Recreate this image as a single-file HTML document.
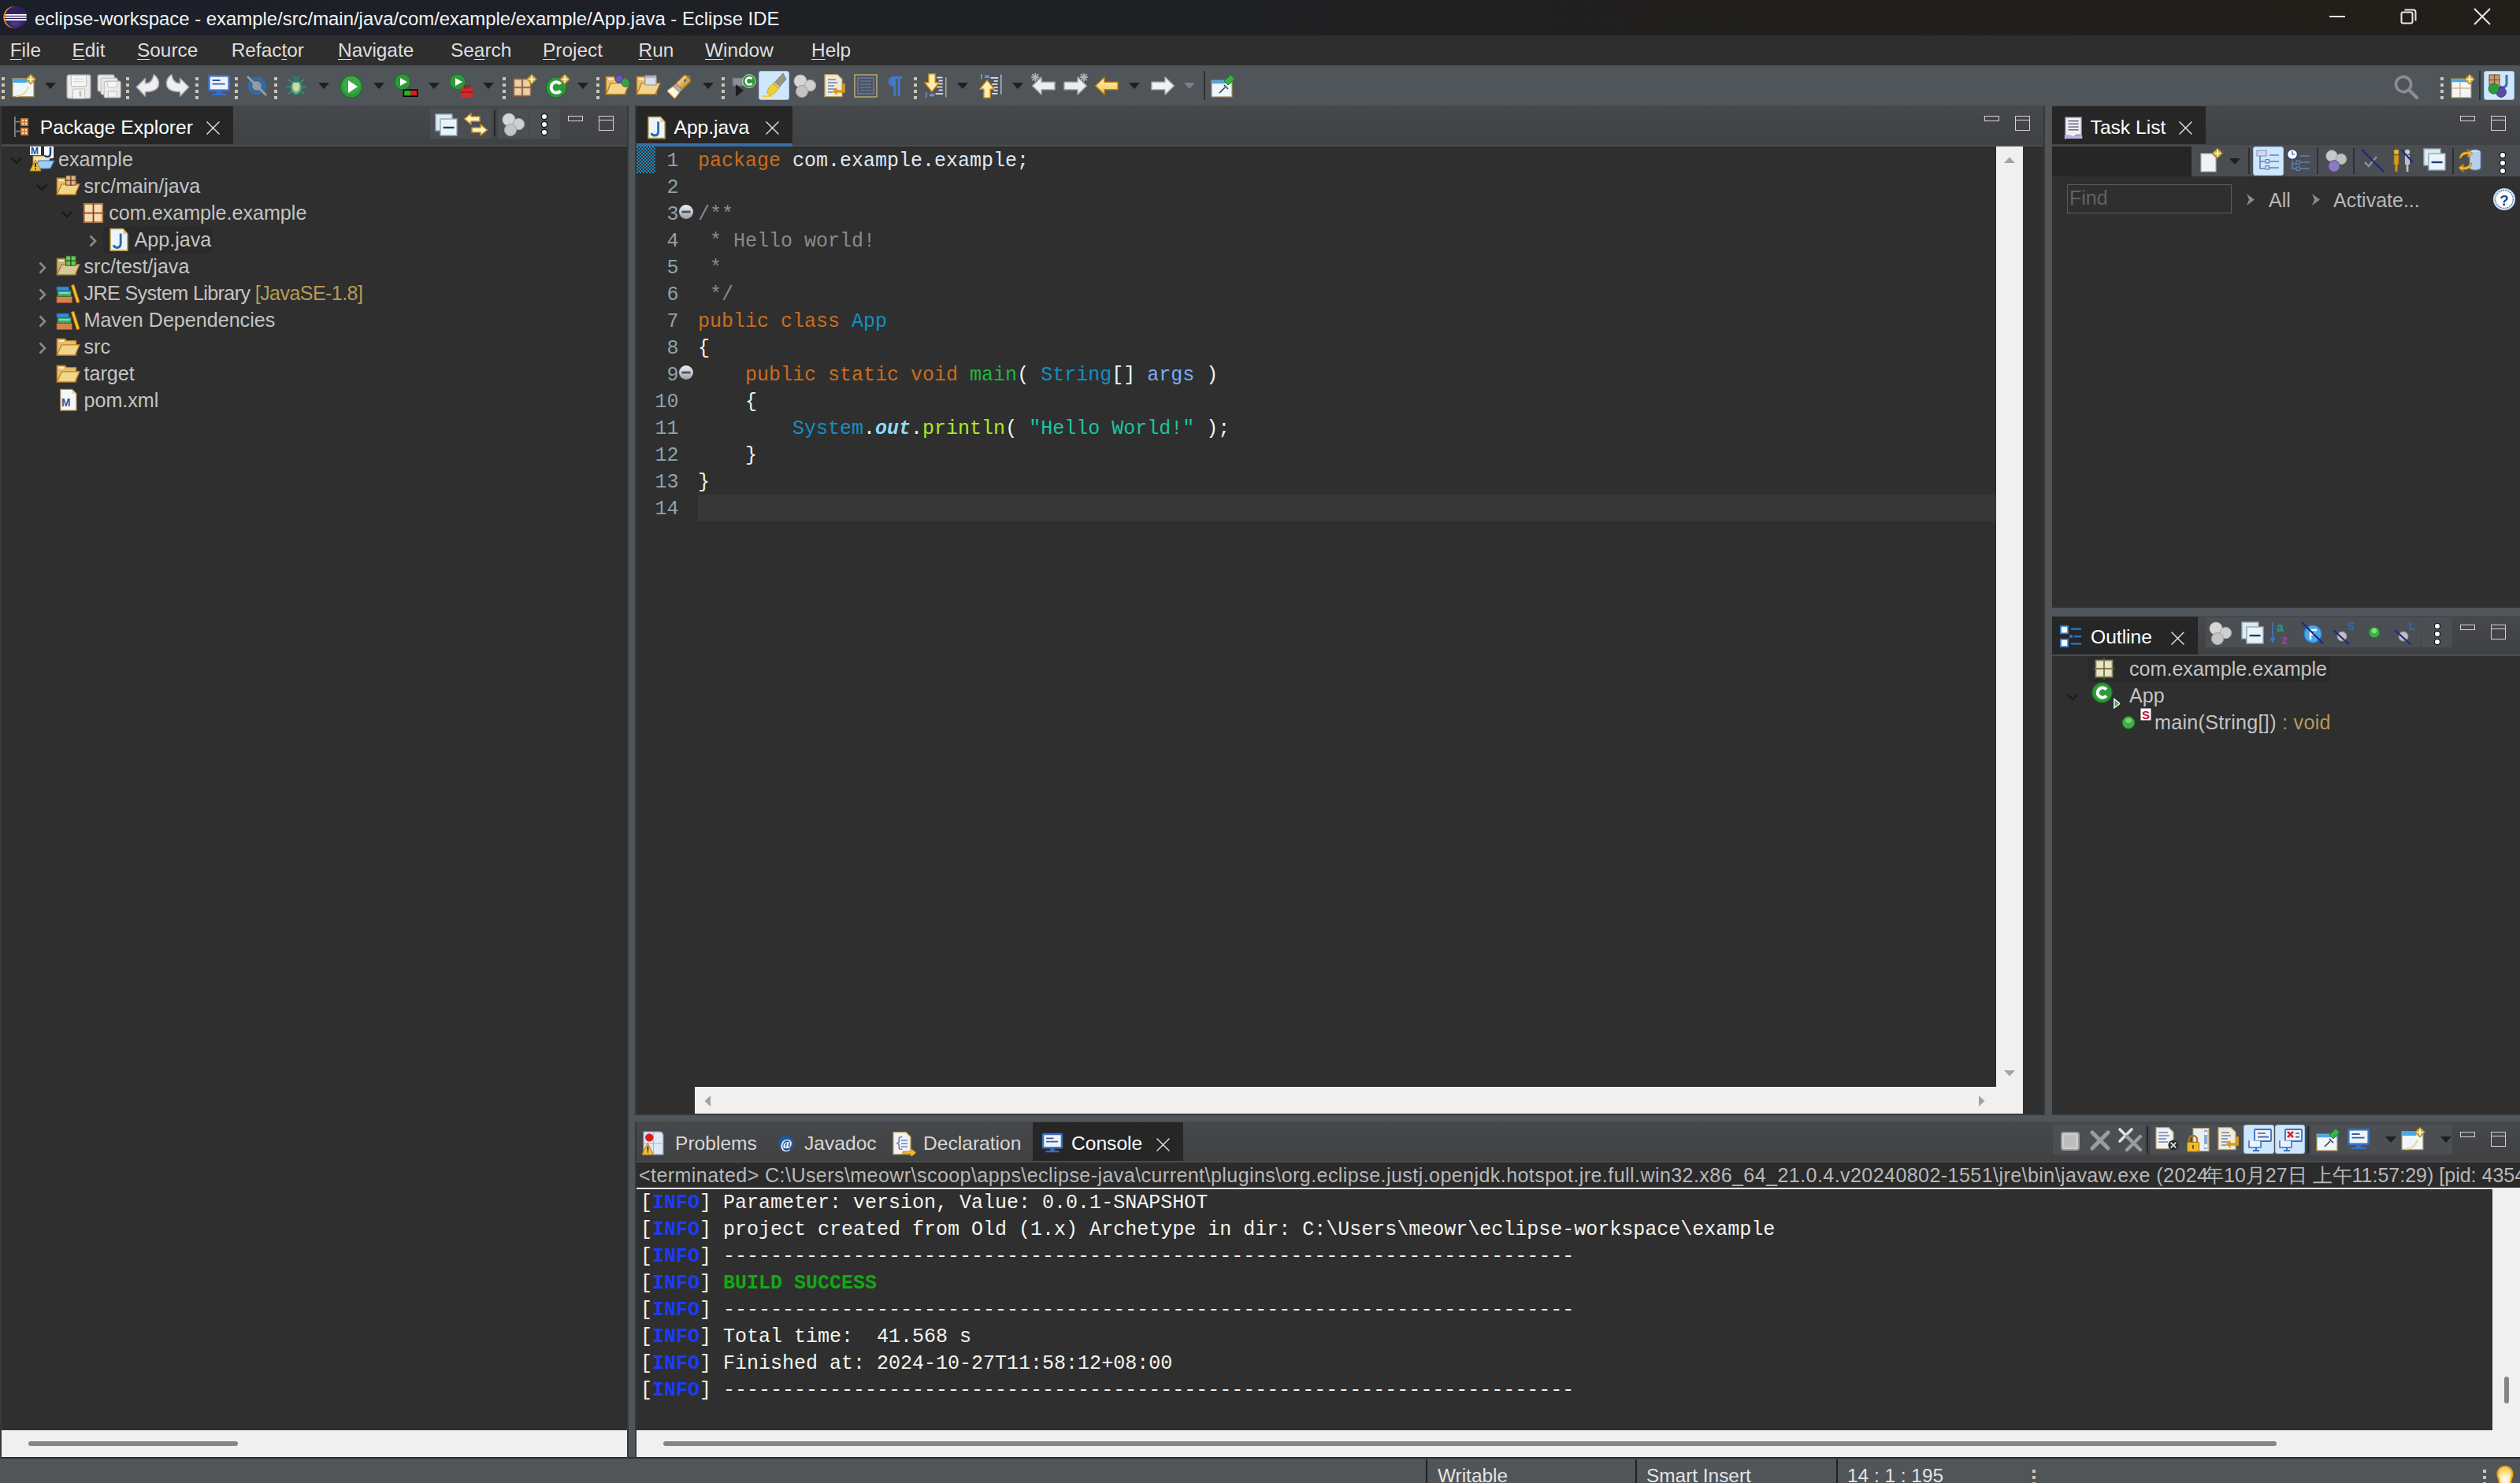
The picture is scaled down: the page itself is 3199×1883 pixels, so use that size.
<!DOCTYPE html><html><head><meta charset="utf-8"><style>html,body{margin:0;padding:0;}body{width:3199px;height:1883px;position:relative;overflow:hidden;background:#50555a;}</style></head><body><div style="position:absolute;left:0px;top:0px;width:3199px;height:45px;background:linear-gradient(90deg,#1b1f29 0%,#1e2025 30%,#1f2022 50%,#211f1d 70%,#221e19 100%);"></div><svg style="position:absolute;left:0px;top:0px;" width="45" height="45" viewBox="0 0 45 45"><circle cx="18.2" cy="21.9" r="13.9" fill="#f7941e"/><circle cx="20.1" cy="21.9" r="13.9" fill="#2f2160"/>
<defs><radialGradient id="eg"><stop offset="0" stop-color="#4b3a8e"/><stop offset="0.7" stop-color="#3f3079"/><stop offset="1" stop-color="#2f2160"/></radialGradient></defs><ellipse cx="19.7" cy="29.5" rx="9" ry="5.5" fill="url(#eg)"/>
<rect x="6" y="17.3" width="28" height="9.4" fill="#231848"/>
<rect x="6.5" y="17.9" width="27.2" height="1.9" fill="#fff"/><rect x="6.2" y="20.9" width="27.5" height="2" fill="#ececec"/><rect x="6.5" y="24.1" width="27.2" height="2" fill="#fff"/></svg><div style="position:absolute;left:44px;top:11.77px;font-family:'Liberation Sans', sans-serif;font-size:23.9px;line-height:23.9px;color:#f4f4f4;white-space:pre;">eclipse-workspace - example/src/main/java/com/example/example/App.java - Eclipse IDE</div><div style="position:absolute;left:2957px;top:20px;width:20px;height:2px;background:#e8e8e8;"></div><svg style="position:absolute;left:3046px;top:9px;" width="24" height="24" viewBox="0 0 24 24"><rect x="2.5" y="6.5" width="14" height="14" rx="2" fill="none" stroke="#e8e8e8" stroke-width="2"/><path d="M6.5 3.5 H17.5 a3 3 0 0 1 3 3 V17.5" fill="none" stroke="#e8e8e8" stroke-width="2"/></svg><svg style="position:absolute;left:3139px;top:9px;" width="24" height="24" viewBox="0 0 24 24"><path d="M2 2 L22 22 M22 2 L2 22" stroke="#e8e8e8" stroke-width="2"/></svg><div style="position:absolute;left:0px;top:45px;width:3199px;height:38px;background:#2e2e2e;"></div><div style="position:absolute;left:12.7px;top:51.95px;font-family:'Liberation Sans', sans-serif;font-size:24.4px;line-height:24.4px;color:#dedede;white-space:pre;"><span style="text-decoration:underline;text-decoration-thickness:1.4px;text-underline-offset:2.5px">F</span>ile</div><div style="position:absolute;left:91.4px;top:51.95px;font-family:'Liberation Sans', sans-serif;font-size:24.4px;line-height:24.4px;color:#dedede;white-space:pre;"><span style="text-decoration:underline;text-decoration-thickness:1.4px;text-underline-offset:2.5px">E</span>dit</div><div style="position:absolute;left:174px;top:51.95px;font-family:'Liberation Sans', sans-serif;font-size:24.4px;line-height:24.4px;color:#dedede;white-space:pre;"><span style="text-decoration:underline;text-decoration-thickness:1.4px;text-underline-offset:2.5px">S</span>ource</div><div style="position:absolute;left:293.7px;top:51.95px;font-family:'Liberation Sans', sans-serif;font-size:24.4px;line-height:24.4px;color:#dedede;white-space:pre;">Refac<span style="text-decoration:underline;text-decoration-thickness:1.4px;text-underline-offset:2.5px">t</span>or</div><div style="position:absolute;left:429px;top:51.95px;font-family:'Liberation Sans', sans-serif;font-size:24.4px;line-height:24.4px;color:#dedede;white-space:pre;"><span style="text-decoration:underline;text-decoration-thickness:1.4px;text-underline-offset:2.5px">N</span>avigate</div><div style="position:absolute;left:572px;top:51.95px;font-family:'Liberation Sans', sans-serif;font-size:24.4px;line-height:24.4px;color:#dedede;white-space:pre;">Se<span style="text-decoration:underline;text-decoration-thickness:1.4px;text-underline-offset:2.5px">a</span>rch</div><div style="position:absolute;left:689px;top:51.95px;font-family:'Liberation Sans', sans-serif;font-size:24.4px;line-height:24.4px;color:#dedede;white-space:pre;"><span style="text-decoration:underline;text-decoration-thickness:1.4px;text-underline-offset:2.5px">P</span>roject</div><div style="position:absolute;left:810.5px;top:51.95px;font-family:'Liberation Sans', sans-serif;font-size:24.4px;line-height:24.4px;color:#dedede;white-space:pre;"><span style="text-decoration:underline;text-decoration-thickness:1.4px;text-underline-offset:2.5px">R</span>un</div><div style="position:absolute;left:895px;top:51.95px;font-family:'Liberation Sans', sans-serif;font-size:24.4px;line-height:24.4px;color:#dedede;white-space:pre;"><span style="text-decoration:underline;text-decoration-thickness:1.4px;text-underline-offset:2.5px">W</span>indow</div><div style="position:absolute;left:1030px;top:51.95px;font-family:'Liberation Sans', sans-serif;font-size:24.4px;line-height:24.4px;color:#dedede;white-space:pre;"><span style="text-decoration:underline;text-decoration-thickness:1.4px;text-underline-offset:2.5px">H</span>elp</div><div style="position:absolute;left:0px;top:83px;width:3199px;height:51px;background:#50555a;"></div><div style="position:absolute;left:0px;top:1850px;width:3199px;height:2px;background:#2b2d2f;"></div><div style="position:absolute;left:0px;top:1852px;width:3199px;height:31px;background:#50555a;"></div><div style="position:absolute;left:0px;top:134px;width:2px;height:1718px;background:#36383a;"></div><div style="position:absolute;left:2px;top:134px;width:794px;height:50px;background:linear-gradient(180deg,#47484b 0%,#404143 100%);"></div><div style="position:absolute;left:2px;top:184px;width:794px;height:2px;background:#4b4c4e;"></div><div style="position:absolute;left:2px;top:135px;width:294px;height:48px;background:#262626;"></div><div style="position:absolute;left:2px;top:186px;width:794px;height:1630px;background:#2f2f2f;"></div><div style="position:absolute;left:2px;top:1816px;width:794px;height:34px;background:#f0f0f0;"></div><div style="position:absolute;left:36px;top:1830px;width:266px;height:6px;background:#858585;border-radius:3px;"></div><div style="position:absolute;left:796px;top:134px;width:2px;height:1718px;background:#36383a;"></div><div style="position:absolute;left:806px;top:134px;width:2px;height:1282px;background:#36383a;"></div><div style="position:absolute;left:808px;top:134px;width:1786px;height:50px;background:linear-gradient(180deg,#47484b 0%,#404143 100%);"></div><div style="position:absolute;left:808px;top:184px;width:1786px;height:2px;background:#4b4c4e;"></div><div style="position:absolute;left:808px;top:135px;width:198px;height:47px;background:#262626;"></div><div style="position:absolute;left:808px;top:182px;width:198px;height:4px;background:#3470a6;"></div><div style="position:absolute;left:808px;top:186px;width:1786px;height:1228px;background:#2f2f2f;"></div><div style="position:absolute;left:2534px;top:186px;width:34px;height:1228px;background:#f0f0f0;"></div><div style="position:absolute;left:882px;top:1380px;width:1652px;height:34px;background:#f0f0f0;"></div><div style="position:absolute;left:2594px;top:134px;width:2px;height:1282px;background:#36383a;"></div><div style="position:absolute;left:806px;top:1414px;width:1790px;height:2px;background:#36383a;"></div><div style="position:absolute;left:2605px;top:134px;width:594px;height:50px;background:linear-gradient(180deg,#47484b 0%,#404143 100%);"></div><div style="position:absolute;left:2605px;top:184px;width:594px;height:2px;background:#4b4c4e;"></div><div style="position:absolute;left:2605px;top:135px;width:195px;height:48px;background:#262626;"></div><div style="position:absolute;left:2605px;top:186px;width:594px;height:584px;background:#2f2f2f;"></div><div style="position:absolute;left:2605px;top:186px;width:177px;height:38px;background:#262626;"></div><div style="position:absolute;left:2782px;top:186px;width:417px;height:38px;background:#4a4e52;"></div><div style="position:absolute;left:2605px;top:770px;width:594px;height:2px;background:#36383a;"></div><div style="position:absolute;left:2605px;top:782px;width:594px;height:49px;background:linear-gradient(180deg,#47484b 0%,#404143 100%);"></div><div style="position:absolute;left:2605px;top:831px;width:594px;height:2px;background:#4b4c4e;"></div><div style="position:absolute;left:2605px;top:783px;width:185px;height:48px;background:#262626;"></div><div style="position:absolute;left:2605px;top:833px;width:594px;height:581px;background:#2f2f2f;"></div><div style="position:absolute;left:2605px;top:1414px;width:594px;height:2px;background:#36383a;"></div><div style="position:absolute;left:806px;top:1424px;width:2px;height:428px;background:#36383a;"></div><div style="position:absolute;left:808px;top:1424px;width:2391px;height:50px;background:linear-gradient(180deg,#47484b 0%,#404143 100%);"></div><div style="position:absolute;left:808px;top:1474px;width:2391px;height:2px;background:#4b4c4e;"></div><div style="position:absolute;left:1311px;top:1425px;width:191px;height:49px;background:#262626;"></div><div style="position:absolute;left:808px;top:1476px;width:2391px;height:32px;background:#2b2b2b;"></div><div style="position:absolute;left:808px;top:1508px;width:2391px;height:2px;background:#f0f0f0;"></div><div style="position:absolute;left:808px;top:1510px;width:2391px;height:306px;background:#2f2f2f;"></div><div style="position:absolute;left:3164px;top:1510px;width:35px;height:306px;background:#f0f0f0;"></div><div style="position:absolute;left:3179px;top:1748px;width:6px;height:34px;background:#858585;border-radius:3px;"></div><div style="position:absolute;left:808px;top:1816px;width:2391px;height:34px;background:#f0f0f0;"></div><div style="position:absolute;left:842px;top:1830px;width:2048px;height:6px;background:#858585;border-radius:3px;"></div><div style="position:absolute;left:50.8px;top:149.93px;font-family:'Liberation Sans', sans-serif;font-size:24.6px;line-height:24.6px;color:#ffffff;white-space:pre;">Package Explorer</div><svg style="position:absolute;left:262px;top:154px;" width="17" height="17" viewBox="0 0 17 17"><path d="M0.5 0.5 L16.5 16.5 M16.5 0.5 L0.5 16.5" stroke="#e6e6e6" stroke-width="1.4"/></svg><div style="position:absolute;left:855.5px;top:149.93px;font-family:'Liberation Sans', sans-serif;font-size:24.6px;line-height:24.6px;color:#ffffff;white-space:pre;">App.java</div><svg style="position:absolute;left:972px;top:154px;" width="17" height="17" viewBox="0 0 17 17"><path d="M0.5 0.5 L16.5 16.5 M16.5 0.5 L0.5 16.5" stroke="#e6e6e6" stroke-width="1.4"/></svg><div style="position:absolute;left:2653.6px;top:149.93px;font-family:'Liberation Sans', sans-serif;font-size:24.6px;line-height:24.6px;color:#ffffff;white-space:pre;">Task List</div><svg style="position:absolute;left:2766px;top:154px;" width="17" height="17" viewBox="0 0 17 17"><path d="M0.5 0.5 L16.5 16.5 M16.5 0.5 L0.5 16.5" stroke="#e6e6e6" stroke-width="1.4"/></svg><div style="position:absolute;left:2654px;top:797.18px;font-family:'Liberation Sans', sans-serif;font-size:24.6px;line-height:24.6px;color:#ffffff;white-space:pre;">Outline</div><svg style="position:absolute;left:2756px;top:802px;" width="17" height="17" viewBox="0 0 17 17"><path d="M0.5 0.5 L16.5 16.5 M16.5 0.5 L0.5 16.5" stroke="#e6e6e6" stroke-width="1.4"/></svg><div style="position:absolute;left:857px;top:1440.18px;font-family:'Liberation Sans', sans-serif;font-size:24.6px;line-height:24.6px;color:#d8d8d8;white-space:pre;">Problems</div><div style="position:absolute;left:1021px;top:1440.18px;font-family:'Liberation Sans', sans-serif;font-size:24.6px;line-height:24.6px;color:#d8d8d8;white-space:pre;">Javadoc</div><div style="position:absolute;left:1172px;top:1440.18px;font-family:'Liberation Sans', sans-serif;font-size:24.6px;line-height:24.6px;color:#d8d8d8;white-space:pre;">Declaration</div><div style="position:absolute;left:1360px;top:1440.18px;font-family:'Liberation Sans', sans-serif;font-size:24.6px;line-height:24.6px;color:#ffffff;white-space:pre;">Console</div><svg style="position:absolute;left:1468px;top:1445px;" width="17" height="17" viewBox="0 0 17 17"><path d="M0.5 0.5 L16.5 16.5 M16.5 0.5 L0.5 16.5" stroke="#e6e6e6" stroke-width="1.4"/></svg><div style="position:absolute;left:131px;top:288px;width:139px;height:34px;background:#2a2a2a;border-radius:3px;"></div><div style="position:absolute;left:74px;top:189.75px;font-family:'Liberation Sans', sans-serif;font-size:25.1px;line-height:25.1px;color:#c4c4c4;white-space:pre;">example</div><div style="position:absolute;left:106.5px;top:223.75px;font-family:'Liberation Sans', sans-serif;font-size:25.1px;line-height:25.1px;color:#c4c4c4;white-space:pre;">src/main/java</div><div style="position:absolute;left:138.3px;top:257.75px;font-family:'Liberation Sans', sans-serif;font-size:25.1px;line-height:25.1px;color:#c4c4c4;white-space:pre;">com.example.example</div><div style="position:absolute;left:170.6px;top:291.75px;font-family:'Liberation Sans', sans-serif;font-size:25.1px;line-height:25.1px;color:#c4c4c4;white-space:pre;">App.java</div><div style="position:absolute;left:106.5px;top:325.75px;font-family:'Liberation Sans', sans-serif;font-size:25.1px;line-height:25.1px;color:#c4c4c4;white-space:pre;">src/test/java</div><div style="position:absolute;left:106.5px;top:393.75px;font-family:'Liberation Sans', sans-serif;font-size:25.1px;line-height:25.1px;color:#c4c4c4;white-space:pre;">Maven Dependencies</div><div style="position:absolute;left:106.5px;top:427.75px;font-family:'Liberation Sans', sans-serif;font-size:25.1px;line-height:25.1px;color:#c4c4c4;white-space:pre;">src</div><div style="position:absolute;left:106.5px;top:461.75px;font-family:'Liberation Sans', sans-serif;font-size:25.1px;line-height:25.1px;color:#c4c4c4;white-space:pre;">target</div><div style="position:absolute;left:106.5px;top:495.75px;font-family:'Liberation Sans', sans-serif;font-size:25.1px;line-height:25.1px;color:#c4c4c4;white-space:pre;">pom.xml</div><div style="position:absolute;left:106.5px;top:359.75px;font-family:'Liberation Sans', sans-serif;font-size:25.1px;line-height:25.1px;color:#c4c4c4;white-space:pre;letter-spacing:-0.6px;">JRE System Library <span style="color:#b59a57">[JavaSE-1.8]</span></div><svg style="position:absolute;left:13px;top:199.4px;" width="16" height="10" viewBox="0 0 16 10"><path d="M1.5 1.5 L8 8 L14.5 1.5" fill="none" stroke="#1c1c1c" stroke-width="2.6"/></svg><svg style="position:absolute;left:45px;top:233.3px;" width="16" height="10" viewBox="0 0 16 10"><path d="M1.5 1.5 L8 8 L14.5 1.5" fill="none" stroke="#1c1c1c" stroke-width="2.6"/></svg><svg style="position:absolute;left:77px;top:266.7px;" width="16" height="10" viewBox="0 0 16 10"><path d="M1.5 1.5 L8 8 L14.5 1.5" fill="none" stroke="#1c1c1c" stroke-width="2.6"/></svg><svg style="position:absolute;left:113px;top:298.3px;" width="10" height="16" viewBox="0 0 10 16"><path d="M1.5 1.5 L8 8 L1.5 14.5" fill="none" stroke="#8a8a8a" stroke-width="2.6"/></svg><svg style="position:absolute;left:49px;top:332.4px;" width="10" height="16" viewBox="0 0 10 16"><path d="M1.5 1.5 L8 8 L1.5 14.5" fill="none" stroke="#8a8a8a" stroke-width="2.6"/></svg><svg style="position:absolute;left:49px;top:366.4px;" width="10" height="16" viewBox="0 0 10 16"><path d="M1.5 1.5 L8 8 L1.5 14.5" fill="none" stroke="#8a8a8a" stroke-width="2.6"/></svg><svg style="position:absolute;left:49px;top:400.4px;" width="10" height="16" viewBox="0 0 10 16"><path d="M1.5 1.5 L8 8 L1.5 14.5" fill="none" stroke="#8a8a8a" stroke-width="2.6"/></svg><svg style="position:absolute;left:49px;top:434.4px;" width="10" height="16" viewBox="0 0 10 16"><path d="M1.5 1.5 L8 8 L1.5 14.5" fill="none" stroke="#8a8a8a" stroke-width="2.6"/></svg><div style="position:absolute;left:886px;top:628px;width:1648px;height:34px;background:#373737;"></div><div style="position:absolute;left:886px;top:192.34px;font-family:'Liberation Mono', monospace;font-size:25px;line-height:25px;color:#dfe9f5;white-space:pre;"><span style="color:#cc6c1d;">package</span><span style="color:#dfe9f5;"> com.example.example;</span></div><div style="position:absolute;left:846.5px;top:192.34px;font-family:'Liberation Mono', monospace;font-size:25px;line-height:25px;color:#8ea4a9;white-space:pre;">1</div><div style="position:absolute;left:886px;top:226.34px;font-family:'Liberation Mono', monospace;font-size:25px;line-height:25px;color:#dfe9f5;white-space:pre;"></div><div style="position:absolute;left:846.5px;top:226.34px;font-family:'Liberation Mono', monospace;font-size:25px;line-height:25px;color:#8ea4a9;white-space:pre;">2</div><div style="position:absolute;left:886px;top:260.34px;font-family:'Liberation Mono', monospace;font-size:25px;line-height:25px;color:#dfe9f5;white-space:pre;"><span style="color:#8a8a8a;">/**</span></div><div style="position:absolute;left:846.5px;top:260.34px;font-family:'Liberation Mono', monospace;font-size:25px;line-height:25px;color:#8ea4a9;white-space:pre;">3</div><div style="position:absolute;left:886px;top:294.34px;font-family:'Liberation Mono', monospace;font-size:25px;line-height:25px;color:#dfe9f5;white-space:pre;"><span style="color:#8a8a8a;"> * Hello world!</span></div><div style="position:absolute;left:846.5px;top:294.34px;font-family:'Liberation Mono', monospace;font-size:25px;line-height:25px;color:#8ea4a9;white-space:pre;">4</div><div style="position:absolute;left:886px;top:328.34px;font-family:'Liberation Mono', monospace;font-size:25px;line-height:25px;color:#dfe9f5;white-space:pre;"><span style="color:#8a8a8a;"> *</span></div><div style="position:absolute;left:846.5px;top:328.34px;font-family:'Liberation Mono', monospace;font-size:25px;line-height:25px;color:#8ea4a9;white-space:pre;">5</div><div style="position:absolute;left:886px;top:362.34px;font-family:'Liberation Mono', monospace;font-size:25px;line-height:25px;color:#dfe9f5;white-space:pre;"><span style="color:#8a8a8a;"> */</span></div><div style="position:absolute;left:846.5px;top:362.34px;font-family:'Liberation Mono', monospace;font-size:25px;line-height:25px;color:#8ea4a9;white-space:pre;">6</div><div style="position:absolute;left:886px;top:396.34px;font-family:'Liberation Mono', monospace;font-size:25px;line-height:25px;color:#dfe9f5;white-space:pre;"><span style="color:#cc6c1d;">public</span> <span style="color:#cc6c1d;">class</span> <span style="color:#1290c3;">App</span></div><div style="position:absolute;left:846.5px;top:396.34px;font-family:'Liberation Mono', monospace;font-size:25px;line-height:25px;color:#8ea4a9;white-space:pre;">7</div><div style="position:absolute;left:886px;top:430.34px;font-family:'Liberation Mono', monospace;font-size:25px;line-height:25px;color:#dfe9f5;white-space:pre;"><span style="color:#f4f4f0;">{</span></div><div style="position:absolute;left:846.5px;top:430.34px;font-family:'Liberation Mono', monospace;font-size:25px;line-height:25px;color:#8ea4a9;white-space:pre;">8</div><div style="position:absolute;left:886px;top:464.34px;font-family:'Liberation Mono', monospace;font-size:25px;line-height:25px;color:#dfe9f5;white-space:pre;">    <span style="color:#cc6c1d;">public</span> <span style="color:#cc6c1d;">static</span> <span style="color:#cc6c1d;">void</span> <span style="color:#1eb540;">main</span><span style="color:#f4f4f0;">( </span><span style="color:#1290c3;">String</span><span style="color:#f4f4f0;">[] </span><span style="color:#79abff;">args</span><span style="color:#f4f4f0;"> )</span></div><div style="position:absolute;left:846.5px;top:464.34px;font-family:'Liberation Mono', monospace;font-size:25px;line-height:25px;color:#8ea4a9;white-space:pre;">9</div><div style="position:absolute;left:886px;top:498.34px;font-family:'Liberation Mono', monospace;font-size:25px;line-height:25px;color:#dfe9f5;white-space:pre;">    <span style="color:#f4f4f0;">{</span></div><div style="position:absolute;left:831.5px;top:498.34px;font-family:'Liberation Mono', monospace;font-size:25px;line-height:25px;color:#8ea4a9;white-space:pre;">10</div><div style="position:absolute;left:886px;top:532.34px;font-family:'Liberation Mono', monospace;font-size:25px;line-height:25px;color:#dfe9f5;white-space:pre;">        <span style="color:#1290c3;">System</span><span style="color:#f4f4f0;">.</span><span style="color:#8ddaf8;font-weight:bold;font-style:italic;">out</span><span style="color:#f4f4f0;">.</span><span style="color:#a7ec21;">println</span><span style="color:#f4f4f0;">( </span><span style="color:#17c6a3;">&quot;Hello World!&quot;</span><span style="color:#f4f4f0;"> );</span></div><div style="position:absolute;left:831.5px;top:532.34px;font-family:'Liberation Mono', monospace;font-size:25px;line-height:25px;color:#8ea4a9;white-space:pre;">11</div><div style="position:absolute;left:886px;top:566.34px;font-family:'Liberation Mono', monospace;font-size:25px;line-height:25px;color:#dfe9f5;white-space:pre;">    <span style="color:#f4f4f0;">}</span></div><div style="position:absolute;left:831.5px;top:566.34px;font-family:'Liberation Mono', monospace;font-size:25px;line-height:25px;color:#8ea4a9;white-space:pre;">12</div><div style="position:absolute;left:886px;top:600.34px;font-family:'Liberation Mono', monospace;font-size:25px;line-height:25px;color:#dfe9f5;white-space:pre;"><span style="color:#f4f4f0;">}</span></div><div style="position:absolute;left:831.5px;top:600.34px;font-family:'Liberation Mono', monospace;font-size:25px;line-height:25px;color:#8ea4a9;white-space:pre;">13</div><div style="position:absolute;left:886px;top:634.34px;font-family:'Liberation Mono', monospace;font-size:25px;line-height:25px;color:#dfe9f5;white-space:pre;"></div><div style="position:absolute;left:831.5px;top:634.34px;font-family:'Liberation Mono', monospace;font-size:25px;line-height:25px;color:#8ea4a9;white-space:pre;">14</div><svg style="position:absolute;left:808px;top:186px;" width="24" height="34" viewBox="0 0 24 34"><defs><pattern id="chk" width="4" height="4" patternUnits="userSpaceOnUse"><rect width="4" height="4" fill="#1b8fc6"/><rect x="2" y="0" width="2" height="2" fill="#3a2a22"/><rect x="0" y="2" width="2" height="2" fill="#3a2a22"/></pattern></defs><rect width="24" height="34" fill="url(#chk)"/></svg><svg style="position:absolute;left:861px;top:259px;" width="20" height="20" viewBox="0 0 20 20"><defs><linearGradient id="fg" x1="0" y1="0" x2="0" y2="1"><stop offset="0" stop-color="#f0f2f6"/><stop offset="1" stop-color="#9a9ea6"/></linearGradient></defs><circle cx="10" cy="10" r="9" fill="url(#fg)"/><rect x="4.5" y="8.6" width="11" height="2.8" fill="#4a5060"/></svg><svg style="position:absolute;left:861px;top:463px;" width="20" height="20" viewBox="0 0 20 20"><defs><linearGradient id="fg" x1="0" y1="0" x2="0" y2="1"><stop offset="0" stop-color="#f0f2f6"/><stop offset="1" stop-color="#9a9ea6"/></linearGradient></defs><circle cx="10" cy="10" r="9" fill="url(#fg)"/><rect x="4.5" y="8.6" width="11" height="2.8" fill="#4a5060"/></svg><div style="position:absolute;left:811px;top:1479.84px;font-family:'Liberation Sans', sans-serif;font-size:25px;line-height:25px;color:#b8b8b8;white-space:pre;letter-spacing:0.45px;">&lt;terminated&gt; C:\Users\meowr\scoop\apps\eclipse-java\current\plugins\org.eclipse.justj.openjdk.hotspot.jre.full.win32.x86_64_21.0.4.v20240802-1551\jre\bin\javaw.exe (2024</div><div style="position:absolute;left:2798px;top:1479.84px;font-family:'Liberation Sans', sans-serif;font-size:25px;line-height:25px;color:#b8b8b8;white-space:pre;">年10月27日 上午11:57:29) [pid: 4354]</div><div style="position:absolute;left:813px;top:1515.34px;font-family:'Liberation Mono', monospace;font-size:25px;line-height:25px;color:#f4f4f0;white-space:pre;"><span style="color:#f4f4f0;">[</span><span style="color:#1a3cff;font-weight:bold;">INFO</span><span style="color:#f4f4f0;">] </span><span style="color:#f4f4f0;">Parameter: version, Value: 0.0.1-SNAPSHOT</span></div><div style="position:absolute;left:813px;top:1549.34px;font-family:'Liberation Mono', monospace;font-size:25px;line-height:25px;color:#f4f4f0;white-space:pre;"><span style="color:#f4f4f0;">[</span><span style="color:#1a3cff;font-weight:bold;">INFO</span><span style="color:#f4f4f0;">] </span><span style="color:#f4f4f0;">project created from Old (1.x) Archetype in dir: C:\Users\meowr\eclipse-workspace\example</span></div><div style="position:absolute;left:813px;top:1583.34px;font-family:'Liberation Mono', monospace;font-size:25px;line-height:25px;color:#f4f4f0;white-space:pre;"><span style="color:#f4f4f0;">[</span><span style="color:#1a3cff;font-weight:bold;">INFO</span><span style="color:#f4f4f0;">] </span><span style="color:#f4f4f0;">------------------------------------------------------------------------</span></div><div style="position:absolute;left:813px;top:1617.34px;font-family:'Liberation Mono', monospace;font-size:25px;line-height:25px;color:#f4f4f0;white-space:pre;"><span style="color:#f4f4f0;">[</span><span style="color:#1a3cff;font-weight:bold;">INFO</span><span style="color:#f4f4f0;">] </span><span style="color:#14a814;font-weight:bold;">BUILD SUCCESS</span></div><div style="position:absolute;left:813px;top:1651.34px;font-family:'Liberation Mono', monospace;font-size:25px;line-height:25px;color:#f4f4f0;white-space:pre;"><span style="color:#f4f4f0;">[</span><span style="color:#1a3cff;font-weight:bold;">INFO</span><span style="color:#f4f4f0;">] </span><span style="color:#f4f4f0;">------------------------------------------------------------------------</span></div><div style="position:absolute;left:813px;top:1685.34px;font-family:'Liberation Mono', monospace;font-size:25px;line-height:25px;color:#f4f4f0;white-space:pre;"><span style="color:#f4f4f0;">[</span><span style="color:#1a3cff;font-weight:bold;">INFO</span><span style="color:#f4f4f0;">] </span><span style="color:#f4f4f0;">Total time:  41.568 s</span></div><div style="position:absolute;left:813px;top:1719.34px;font-family:'Liberation Mono', monospace;font-size:25px;line-height:25px;color:#f4f4f0;white-space:pre;"><span style="color:#f4f4f0;">[</span><span style="color:#1a3cff;font-weight:bold;">INFO</span><span style="color:#f4f4f0;">] </span><span style="color:#f4f4f0;">Finished at: 2024-10-27T11:58:12+08:00</span></div><div style="position:absolute;left:813px;top:1753.34px;font-family:'Liberation Mono', monospace;font-size:25px;line-height:25px;color:#f4f4f0;white-space:pre;"><span style="color:#f4f4f0;">[</span><span style="color:#1a3cff;font-weight:bold;">INFO</span><span style="color:#f4f4f0;">] </span><span style="color:#f4f4f0;">------------------------------------------------------------------------</span></div><div style="position:absolute;left:2624px;top:234px;width:209px;height:37px;background:transparent;box-sizing:border-box;border:1.5px solid #5c5c5c;"></div><div style="position:absolute;left:2627px;top:239.34px;font-family:'Liberation Sans', sans-serif;font-size:25px;line-height:25px;color:#626262;white-space:pre;">Find</div><div style="position:absolute;left:2880px;top:241.84px;font-family:'Liberation Sans', sans-serif;font-size:25px;line-height:25px;color:#b8b8b8;white-space:pre;">All</div><div style="position:absolute;left:2962px;top:241.84px;font-family:'Liberation Sans', sans-serif;font-size:25px;line-height:25px;color:#b8b8b8;white-space:pre;">Activate...</div><div style="position:absolute;left:2651px;top:833px;width:307px;height:33px;background:#2a2a2a;border-radius:3px;"></div><div style="position:absolute;left:2703px;top:836.75px;font-family:'Liberation Sans', sans-serif;font-size:25.1px;line-height:25.1px;color:#c4c4c4;white-space:pre;">com.example.example</div><div style="position:absolute;left:2703px;top:870.75px;font-family:'Liberation Sans', sans-serif;font-size:25.1px;line-height:25.1px;color:#c4c4c4;white-space:pre;">App</div><div style="position:absolute;left:2735px;top:904.75px;font-family:'Liberation Sans', sans-serif;font-size:25.1px;line-height:25.1px;color:#c4c4c4;white-space:pre;letter-spacing:0.3px;">main(String[]) <span style="color:#b59a57">: void</span></div><svg style="position:absolute;left:2623px;top:879.5px;" width="16" height="10" viewBox="0 0 16 10"><path d="M1.5 1.5 L8 8 L14.5 1.5" fill="none" stroke="#1c1c1c" stroke-width="2.6"/></svg><div style="position:absolute;left:1810px;top:1853px;width:2px;height:30px;background:#1e2022;"></div><div style="position:absolute;left:2076px;top:1853px;width:2px;height:30px;background:#1e2022;"></div><div style="position:absolute;left:2331px;top:1853px;width:2px;height:30px;background:#1e2022;"></div><div style="position:absolute;left:1825px;top:1862.35px;font-family:'Liberation Sans', sans-serif;font-size:24.4px;line-height:24.4px;color:#e4e4e4;white-space:pre;">Writable</div><div style="position:absolute;left:2090px;top:1862.35px;font-family:'Liberation Sans', sans-serif;font-size:24.4px;line-height:24.4px;color:#e4e4e4;white-space:pre;">Smart Insert</div><div style="position:absolute;left:2345px;top:1862.35px;font-family:'Liberation Sans', sans-serif;font-size:24.4px;line-height:24.4px;color:#e4e4e4;white-space:pre;">14 : 1 : 195</div><svg style="position:absolute;left:2px;top:98px" width="32" height="32" viewBox="0 0 16 16" preserveAspectRatio="none"><rect x="0" y="0" width="2" height="2" fill="#cec5b5"/><rect x="0" y="4" width="2" height="2" fill="#cec5b5"/><rect x="0" y="8" width="2" height="2" fill="#cec5b5"/><rect x="0" y="12" width="2" height="2" fill="#cec5b5"/></svg><svg style="position:absolute;left:160px;top:98px" width="32" height="32" viewBox="0 0 16 16" preserveAspectRatio="none"><rect x="0" y="0" width="2" height="2" fill="#cec5b5"/><rect x="0" y="4" width="2" height="2" fill="#cec5b5"/><rect x="0" y="8" width="2" height="2" fill="#cec5b5"/><rect x="0" y="12" width="2" height="2" fill="#cec5b5"/></svg><svg style="position:absolute;left:248px;top:98px" width="32" height="32" viewBox="0 0 16 16" preserveAspectRatio="none"><rect x="0" y="0" width="2" height="2" fill="#cec5b5"/><rect x="0" y="4" width="2" height="2" fill="#cec5b5"/><rect x="0" y="8" width="2" height="2" fill="#cec5b5"/><rect x="0" y="12" width="2" height="2" fill="#cec5b5"/></svg><svg style="position:absolute;left:298px;top:98px" width="32" height="32" viewBox="0 0 16 16" preserveAspectRatio="none"><rect x="0" y="0" width="2" height="2" fill="#cec5b5"/><rect x="0" y="4" width="2" height="2" fill="#cec5b5"/><rect x="0" y="8" width="2" height="2" fill="#cec5b5"/><rect x="0" y="12" width="2" height="2" fill="#cec5b5"/></svg><svg style="position:absolute;left:348px;top:98px" width="32" height="32" viewBox="0 0 16 16" preserveAspectRatio="none"><rect x="0" y="0" width="2" height="2" fill="#cec5b5"/><rect x="0" y="4" width="2" height="2" fill="#cec5b5"/><rect x="0" y="8" width="2" height="2" fill="#cec5b5"/><rect x="0" y="12" width="2" height="2" fill="#cec5b5"/></svg><svg style="position:absolute;left:638px;top:98px" width="32" height="32" viewBox="0 0 16 16" preserveAspectRatio="none"><rect x="0" y="0" width="2" height="2" fill="#cec5b5"/><rect x="0" y="4" width="2" height="2" fill="#cec5b5"/><rect x="0" y="8" width="2" height="2" fill="#cec5b5"/><rect x="0" y="12" width="2" height="2" fill="#cec5b5"/></svg><svg style="position:absolute;left:757px;top:98px" width="32" height="32" viewBox="0 0 16 16" preserveAspectRatio="none"><rect x="0" y="0" width="2" height="2" fill="#cec5b5"/><rect x="0" y="4" width="2" height="2" fill="#cec5b5"/><rect x="0" y="8" width="2" height="2" fill="#cec5b5"/><rect x="0" y="12" width="2" height="2" fill="#cec5b5"/></svg><svg style="position:absolute;left:916px;top:98px" width="32" height="32" viewBox="0 0 16 16" preserveAspectRatio="none"><rect x="0" y="0" width="2" height="2" fill="#cec5b5"/><rect x="0" y="4" width="2" height="2" fill="#cec5b5"/><rect x="0" y="8" width="2" height="2" fill="#cec5b5"/><rect x="0" y="12" width="2" height="2" fill="#cec5b5"/></svg><svg style="position:absolute;left:1160px;top:98px" width="32" height="32" viewBox="0 0 16 16" preserveAspectRatio="none"><rect x="0" y="0" width="2" height="2" fill="#cec5b5"/><rect x="0" y="4" width="2" height="2" fill="#cec5b5"/><rect x="0" y="8" width="2" height="2" fill="#cec5b5"/><rect x="0" y="12" width="2" height="2" fill="#cec5b5"/></svg><svg style="position:absolute;left:3098px;top:98px" width="32" height="32" viewBox="0 0 16 16" preserveAspectRatio="none"><rect x="0" y="0" width="2" height="2" fill="#cec5b5"/><rect x="0" y="4" width="2" height="2" fill="#cec5b5"/><rect x="0" y="8" width="2" height="2" fill="#cec5b5"/><rect x="0" y="12" width="2" height="2" fill="#cec5b5"/></svg><svg style="position:absolute;left:14px;top:93px" width="32" height="32" viewBox="0 0 16 16" preserveAspectRatio="none"><rect x="1" y="3.3" width="13.5" height="11.6" fill="#eef7ff" stroke="#a98f4e" stroke-width="0.6"/><rect x="1.2" y="3.4" width="9" height="2.6" fill="#46a9e6"/><path d="M3 14.5 q6 0 8 -6" stroke="#f1d47a" stroke-width="0.9" fill="none"/><path d="M12.5 0.5 l3.3 3.3 l-3.3 3.3 l-3.3 -3.3z" fill="#caa43a" stroke="#9c7a20" stroke-width="0.4"/><path d="M12.5 1.9 v3.8 M10.6 3.8 h3.8" stroke="#fff6d8" stroke-width="0.9"/></svg><svg style="position:absolute;left:48px;top:92px" width="32" height="32" viewBox="0 0 16 16" preserveAspectRatio="none"><path d="M4.5 6.5 h7 l-3.5 4z" fill="#1f1f1f"/></svg><svg style="position:absolute;left:84px;top:94px" width="32" height="32" viewBox="0 0 16 16" preserveAspectRatio="none"><rect x="0.6" y="0.6" width="14.8" height="14.8" rx="1.2" fill="#ebebeb" stroke="#bdbdbd" stroke-width="0.7"/><rect x="3.2" y="0.8" width="9.6" height="7" rx="0.6" fill="#f6f6f6" stroke="#c4c4c4" stroke-width="0.6"/><path d="M4.5 3 h7 M4.5 4.8 h7" stroke="#d4d4d4" stroke-width="0.6"/><rect x="4.2" y="9.5" width="7.6" height="6" rx="0.5" fill="#f3f3f3" stroke="#c0c0c0" stroke-width="0.6"/><rect x="8.3" y="10.8" width="1.3" height="3.5" fill="#bdbdbd"/></svg><svg style="position:absolute;left:123px;top:94px" width="32" height="32" viewBox="0 0 16 16" preserveAspectRatio="none"><rect x="0.6" y="0.6" width="10.4" height="10.4" rx="1" fill="#ebebeb" stroke="#c0c0c0" stroke-width="0.6"/><rect x="2.6" y="2.6" width="10.4" height="10.4" rx="1" fill="#ebebeb" stroke="#c0c0c0" stroke-width="0.6"/><rect x="4.6" y="4.6" width="10.4" height="10.4" rx="1" fill="#ebebeb" stroke="#c0c0c0" stroke-width="0.6"/><rect x="6.8" y="4.8" width="6" height="3.6" rx="0.4" fill="#f5f5f5" stroke="#c4c4c4" stroke-width="0.5"/><rect x="7.2" y="11" width="5.4" height="3.7" fill="#f3f3f3" stroke="#c0c0c0" stroke-width="0.5"/></svg><svg style="position:absolute;left:172px;top:93px" width="32" height="32" viewBox="0 0 16 16" preserveAspectRatio="none"><path d="M0.6 8.8 L6.2 3.2 V6.4 Q10.6 6.6 11.6 0.8 Q15.6 3.6 14.6 8 Q13.4 11.8 6.2 11.8 V14.6 Z" fill="#efefef" stroke="#a9a9a9" stroke-width="0.7" stroke-linejoin="round"/></svg><svg style="position:absolute;left:209px;top:93px" width="32" height="32" viewBox="0 0 16 16" preserveAspectRatio="none"><g transform="translate(16,0) scale(-1,1)"><path d="M0.6 8.8 L6.2 3.2 V6.4 Q10.6 6.6 11.6 0.8 Q15.6 3.6 14.6 8 Q13.4 11.8 6.2 11.8 V14.6 Z" fill="#efefef" stroke="#a9a9a9" stroke-width="0.7" stroke-linejoin="round"/></g></svg><svg style="position:absolute;left:261.5px;top:92px" width="32" height="32" viewBox="0 0 16 16" preserveAspectRatio="none"><rect x="1" y="1.5" width="14" height="10.5" rx="1" fill="#3a70c4"/><rect x="2.3" y="2.8" width="11.4" height="7.9" fill="#eef3fb"/><path d="M3.8 5 h5 M3.8 7.3 h8" stroke="#3a5a9a" stroke-width="0.9"/><rect x="6.5" y="12" width="3" height="1.6" fill="#3a70c4"/><rect x="3.5" y="13.4" width="9" height="1.1" fill="#3a70c4"/></svg><svg style="position:absolute;left:310px;top:93px" width="32" height="32" viewBox="0 0 16 16" preserveAspectRatio="none"><circle cx="8" cy="8" r="4.6" fill="none" stroke="#2f6ea7" stroke-width="2.2"/><circle cx="8" cy="8" r="3" fill="#a8c8e8" opacity="0.6"/><path d="M2 2 L14 14" stroke="#9aa0a6" stroke-width="1.3"/></svg><svg style="position:absolute;left:360px;top:93px" width="32" height="32" viewBox="0 0 16 16" preserveAspectRatio="none"><g stroke="#2aa08a" stroke-width="0.8"><path d="M3 4 L5.5 6 M13 4 L10.5 6 M1.5 8.5 H4.5 M14.5 8.5 H11.5 M3 13 L5.5 11 M13 13 L10.5 11 M6.5 2 L7.3 4 M9.5 2 L8.7 4"/></g><ellipse cx="8" cy="9" rx="3.6" ry="4.6" fill="#6fa76c" stroke="#2a7a70" stroke-width="0.8"/><ellipse cx="8" cy="8.5" rx="2.2" ry="3.2" fill="#c4dcae"/><circle cx="8" cy="4.4" r="1.6" fill="#2a7a70"/></svg><svg style="position:absolute;left:395px;top:92px" width="32" height="32" viewBox="0 0 16 16" preserveAspectRatio="none"><path d="M4.5 6.5 h7 l-3.5 4z" fill="#1f1f1f"/></svg><svg style="position:absolute;left:430px;top:94px" width="32" height="32" viewBox="0 0 16 16" preserveAspectRatio="none"><circle cx="8" cy="8" r="7" fill="#2c9a3a" stroke="#1a6b25" stroke-width="0.6"/><circle cx="8" cy="7" r="5.5" fill="#48b34f" opacity="0.6"/><path d="M6 4 L12 8 L6 12z" fill="#ffffff"/></svg><svg style="position:absolute;left:465px;top:92px" width="32" height="32" viewBox="0 0 16 16" preserveAspectRatio="none"><path d="M4.5 6.5 h7 l-3.5 4z" fill="#1f1f1f"/></svg><svg style="position:absolute;left:500px;top:93px" width="32" height="32" viewBox="0 0 16 16" preserveAspectRatio="none"><circle cx="5.5" cy="5.5" r="5" fill="#2c9a3a" stroke="#1a6b25" stroke-width="0.5"/><path d="M4 3 L8.5 5.5 L4 8z" fill="#fff"/><rect x="5.8" y="10.2" width="9.5" height="4.8" fill="#000"/><rect x="6.6" y="11" width="4" height="3.2" fill="#29b22b"/><rect x="10.6" y="11" width="4" height="3.2" fill="#d82020"/></svg><svg style="position:absolute;left:535px;top:92px" width="32" height="32" viewBox="0 0 16 16" preserveAspectRatio="none"><path d="M4.5 6.5 h7 l-3.5 4z" fill="#1f1f1f"/></svg><svg style="position:absolute;left:570px;top:93px" width="32" height="32" viewBox="0 0 16 16" preserveAspectRatio="none"><circle cx="5.5" cy="5.5" r="5" fill="#2c9a3a" stroke="#1a6b25" stroke-width="0.5"/><path d="M4 3 L8.5 5.5 L4 8z" fill="#fff"/><rect x="7.5" y="9" width="7.5" height="6.5" rx="0.6" fill="#d42a2a"/><rect x="9.8" y="7.8" width="3" height="1.6" fill="none" stroke="#a01818" stroke-width="0.7"/><path d="M7.5 12 h7.5" stroke="#8a1010" stroke-width="0.6"/></svg><svg style="position:absolute;left:604px;top:92px" width="32" height="32" viewBox="0 0 16 16" preserveAspectRatio="none"><path d="M4.5 6.5 h7 l-3.5 4z" fill="#1f1f1f"/></svg><svg style="position:absolute;left:650px;top:93px" width="32" height="32" viewBox="0 0 16 16" preserveAspectRatio="none"><rect x="1" y="3.5" width="11" height="11" fill="#c99a6b" stroke="#8e5a36" stroke-width="0.6"/><rect x="1.8" y="4.3" width="4" height="4" fill="#ead2b0"/><rect x="7.2" y="4.3" width="4" height="4" fill="#ead2b0"/><rect x="1.8" y="9.7" width="4" height="4" fill="#ead2b0"/><rect x="7.2" y="9.7" width="4" height="4" fill="#ead2b0"/><path d="M6.5 2.5 v13 M0 9 h13" stroke="#7a4a2a" stroke-width="0.5"/><path d="M12.5 0.5 l3.3 3.3 l-3.3 3.3 l-3.3 -3.3z" fill="#caa43a" stroke="#9c7a20" stroke-width="0.4"/><path d="M12.5 1.9 v3.8 M10.6 3.8 h3.8" stroke="#fff6d8" stroke-width="0.9"/></svg><svg style="position:absolute;left:692px;top:93px" width="32" height="32" viewBox="0 0 16 16" preserveAspectRatio="none"><circle cx="7" cy="9" r="6.5" fill="#2d9a3a" stroke="#1d6a28" stroke-width="0.6"/><path d="M9.8 6.8 A3.4 3.4 0 1 0 9.8 11.2" fill="none" stroke="#fff" stroke-width="2"/><path d="M12.5 0.5 l3.3 3.3 l-3.3 3.3 l-3.3 -3.3z" fill="#caa43a" stroke="#9c7a20" stroke-width="0.4"/><path d="M12.5 1.9 v3.8 M10.6 3.8 h3.8" stroke="#fff6d8" stroke-width="0.9"/></svg><svg style="position:absolute;left:724px;top:92px" width="32" height="32" viewBox="0 0 16 16" preserveAspectRatio="none"><path d="M4.5 6.5 h7 l-3.5 4z" fill="#1f1f1f"/></svg><svg style="position:absolute;left:768px;top:93px" width="32" height="32" viewBox="0 0 16 16" preserveAspectRatio="none"><path d="M0.7 2.2 h5 l1.2 1.3 h6.3 v9.8 h-12.5z" fill="#e9c06a" stroke="#b9822e" stroke-width="0.7"/><rect x="2" y="3.2" width="3.2" height="1" fill="#fff" opacity="0.8"/><path d="M0.7 13.3 l3 -7 h11.8 l-3 7z" fill="#f3d58a" stroke="#b9822e" stroke-width="0.7"/><circle cx="9" cy="3.5" r="2.6" fill="#6a55b0" stroke="#3f2f80" stroke-width="0.4"/><circle cx="13" cy="6" r="2.6" fill="#3aa043" stroke="#1f6a28" stroke-width="0.4"/></svg><svg style="position:absolute;left:807px;top:93px" width="32" height="32" viewBox="0 0 16 16" preserveAspectRatio="none"><path d="M0.7 2.2 h5 l1.2 1.3 h6.3 v9.8 h-12.5z" fill="#e9c06a" stroke="#b9822e" stroke-width="0.7"/><rect x="2" y="3.2" width="3.2" height="1" fill="#fff" opacity="0.8"/><path d="M0.7 13.3 l3 -7 h11.8 l-3 7z" fill="#f3d58a" stroke="#b9822e" stroke-width="0.7"/><rect x="6" y="1.5" width="7" height="6" fill="#d8dde6" stroke="#8a94a4" stroke-width="0.5"/><rect x="6" y="1.5" width="7" height="1.5" fill="#a9b4c6"/></svg><svg style="position:absolute;left:847px;top:93px" width="32" height="32" viewBox="0 0 16 16" preserveAspectRatio="none"><defs><linearGradient id="flg" x1="0" y1="0" x2="1" y2="0"><stop offset="0" stop-color="#f6d488"/><stop offset="1" stop-color="#c8902c"/></linearGradient></defs><g transform="rotate(45 8 8)"><rect x="5.2" y="0.4" width="5.6" height="9" rx="1.3" fill="url(#flg)" stroke="#a87420" stroke-width="0.6"/><rect x="7.5" y="2.2" width="0.9" height="2" fill="#3050a0"/><rect x="5.2" y="8.6" width="5.6" height="2.6" fill="#b4aab8" stroke="#8a7a58" stroke-width="0.5"/><path d="M5.2 11.2 h5.6 l0.7 4.8 h-7z" fill="#fff8d8" stroke="#c8a050" stroke-width="0.5"/><circle cx="8" cy="0.2" r="0.9" fill="none" stroke="#b08030" stroke-width="0.5"/></g></svg><svg style="position:absolute;left:883px;top:92px" width="32" height="32" viewBox="0 0 16 16" preserveAspectRatio="none"><path d="M4.5 6.5 h7 l-3.5 4z" fill="#1f1f1f"/></svg><svg style="position:absolute;left:928px;top:93px" width="32" height="32" viewBox="0 0 16 16" preserveAspectRatio="none"><rect x="1" y="3" width="8" height="5" fill="#8a8e94" stroke="#6a6e74" stroke-width="0.4"/><path d="M3 7 L8 11 L3 15z" fill="#1e1e1e"/><circle cx="11.5" cy="5" r="4.2" fill="#2d9a3a" stroke="#e6e6e6" stroke-width="0.4"/><path d="M13.3 3.6 A2.2 2.2 0 1 0 13.3 6.4" fill="none" stroke="#fff" stroke-width="1.3"/></svg><div style="position:absolute;left:963px;top:90px;width:39px;height:37px;background:#cfe7fc;box-sizing:border-box;border:1px solid #98c6ee;border-radius:3px;"></div><svg style="position:absolute;left:967px;top:93px" width="32" height="32" viewBox="0 0 16 16" preserveAspectRatio="none"><path d="M0.3 14.6 h6" stroke="#f2cf2a" stroke-width="0.9"/><g transform="rotate(42 9 8)"><path d="M7 -1 L11 0.5 V7 H7z" fill="#9a957f" stroke="#7a7560" stroke-width="0.4"/><rect x="6.6" y="6.6" width="4.8" height="1.6" fill="#c8c2a8" stroke="#8a8570" stroke-width="0.3"/><path d="M6.6 8.2 h4.8 v4.2 l-1.2 2.8 h-2.4 l-1.2 -2.8z" fill="#f2d12f" stroke="#c8a010" stroke-width="0.4"/></g></svg><svg style="position:absolute;left:1006px;top:93px" width="32" height="32" viewBox="0 0 16 16" preserveAspectRatio="none"><circle cx="5" cy="5" r="4" fill="#d6d6d6" stroke="#b0b0b0" stroke-width="0.5"/><circle cx="11.2" cy="7.8" r="3.6" fill="#cfcfcf" stroke="#a8a8a8" stroke-width="0.5"/><circle cx="6" cy="11.5" r="3.8" fill="#c4c4c4" stroke="#a0a0a0" stroke-width="0.5"/></svg><svg style="position:absolute;left:1044px;top:93px" width="32" height="32" viewBox="0 0 16 16" preserveAspectRatio="none"><path d="M1.5 0.8 h8 l3 3 v11 h-11z" fill="#f0ead6" stroke="#b7a36a" stroke-width="0.6"/><path d="M3.5 4 h5 M3.5 6 h6 M3.5 8 h4 M3.5 10 h5 M3.5 12 h3" stroke="#6b85c4" stroke-width="0.7"/><path d="M13.5 6.5 v5 h-5" fill="none" stroke="#d79a1a" stroke-width="1.8"/><path d="M6.3 11.5 l3 -2.5 v5z" fill="#d79a1a"/></svg><svg style="position:absolute;left:1083px;top:93px" width="32" height="32" viewBox="0 0 16 16" preserveAspectRatio="none"><rect x="1" y="1" width="14" height="14" fill="none" stroke="#b3a36e" stroke-width="0.8"/><rect x="3" y="3" width="10" height="10" fill="none" stroke="#6b85c4" stroke-width="0.6"/><path d="M4.5 5 h7 M4.5 7 h7 M4.5 9 h7 M4.5 11 h7" stroke="#6b85c4" stroke-width="0.6"/></svg><svg style="position:absolute;left:1119px;top:93px" width="32" height="32" viewBox="0 0 16 16" preserveAspectRatio="none"><path d="M7 2 h6 v1.5 h-1.2 v11 h-1.5 v-11 h-1.2 v11 h-1.5 v-6 a3.2 3.2 0 0 1 0 -6.5z" fill="#3f79c9"/></svg><svg style="position:absolute;left:1172px;top:93px" width="32" height="32" viewBox="0 0 16 16" preserveAspectRatio="none"><path d="M3.4 0.4 h4.2 v5.5 h2.6 l-4.7 5.8 l-4.7 -5.8 h2.6z" fill="#ffeeb0" stroke="#c4820e" stroke-width="0.75" stroke-linejoin="round"/><rect x="8.6" y="2.3" width="3.6" height="0.9" fill="#dcdcf0"/><rect x="9.8" y="4.3" width="2.6" height="0.9" fill="#dcdcf0"/><rect x="9.8" y="6.3" width="2.6" height="0.9" fill="#dcdcf0"/><rect x="8.6" y="8.3" width="3.6" height="0.9" fill="#dcdcf0"/><rect x="9.8" y="10.3" width="2.6" height="0.9" fill="#dcdcf0"/><rect x="7.8" y="12.6" width="4.8" height="0.9" fill="#dcdcf0"/><rect x="14" y="2.6" width="0.8" height="12.6" fill="#b0a878"/><rect x="4" y="13" width="3" height="1.7" fill="#6b8fd0"/><rect x="1.6" y="12.2" width="0.7" height="3.3" fill="#8a9ab0"/></svg><svg style="position:absolute;left:1206px;top:92px" width="32" height="32" viewBox="0 0 16 16" preserveAspectRatio="none"><path d="M4.5 6.5 h7 l-3.5 4z" fill="#1f1f1f"/></svg><svg style="position:absolute;left:1242px;top:93px" width="32" height="32" viewBox="0 0 16 16" preserveAspectRatio="none"><path d="M3.4 15.6 h4.2 v-5.5 h2.6 l-4.7 -5.8 l-4.7 5.8 h2.6z" fill="#ffeeb0" stroke="#c4820e" stroke-width="0.75" stroke-linejoin="round"/><rect x="7.8" y="2.5" width="4.8" height="0.9" fill="#dcdcf0"/><rect x="9.8" y="4.5" width="2.6" height="0.9" fill="#dcdcf0"/><rect x="8.6" y="6.5" width="3.6" height="0.9" fill="#dcdcf0"/><rect x="9.8" y="8.5" width="2.6" height="0.9" fill="#dcdcf0"/><rect x="9.8" y="10.5" width="2.6" height="0.9" fill="#dcdcf0"/><rect x="8.6" y="12.5" width="3.6" height="0.9" fill="#dcdcf0"/><rect x="14" y="0.8" width="0.8" height="12.6" fill="#a8b4c8"/><rect x="4" y="1.3" width="3" height="1.7" fill="#6b8fd0"/><rect x="1.6" y="0.5" width="0.7" height="3.3" fill="#b0a878"/></svg><svg style="position:absolute;left:1276px;top:92px" width="32" height="32" viewBox="0 0 16 16" preserveAspectRatio="none"><path d="M4.5 6.5 h7 l-3.5 4z" fill="#1f1f1f"/></svg><svg style="position:absolute;left:1309px;top:93px" width="32" height="32" viewBox="0 0 16 16" preserveAspectRatio="none"><path d="M0.8 8 L6.5 2.5 V5.6 H15 V10.4 H6.5 V13.5z" fill="#ededed" stroke="#a9a9a9" stroke-width="0.7" stroke-linejoin="round"/><path d="M0.6 0.6 l4 4 M4.6 0.6 l-4 4 M2.6 0 v5.2 M0 2.6 h5.2" stroke="#b0b0b0" stroke-width="0.9"/></svg><svg style="position:absolute;left:1349px;top:93px" width="32" height="32" viewBox="0 0 16 16" preserveAspectRatio="none"><g transform="translate(16,0) scale(-1,1)"><path d="M0.8 8 L6.5 2.5 V5.6 H15 V10.4 H6.5 V13.5z" fill="#ededed" stroke="#a9a9a9" stroke-width="0.7" stroke-linejoin="round"/><path d="M0.6 0.6 l4 4 M4.6 0.6 l-4 4 M2.6 0 v5.2 M0 2.6 h5.2" stroke="#b0b0b0" stroke-width="0.9"/></g></svg><svg style="position:absolute;left:1389px;top:93px" width="32" height="32" viewBox="0 0 16 16" preserveAspectRatio="none"><defs><linearGradient id="bkg" x1="0" y1="0" x2="0" y2="1"><stop offset="0" stop-color="#fff4c8"/><stop offset="1" stop-color="#f4c24a"/></linearGradient></defs><path d="M0.8 8 L6.5 2.5 V5.6 H15 V10.4 H6.5 V13.5z" fill="url(#bkg)" stroke="#c0800e" stroke-width="0.7" stroke-linejoin="round"/></svg><svg style="position:absolute;left:1424px;top:92px" width="32" height="32" viewBox="0 0 16 16" preserveAspectRatio="none"><path d="M4.5 6.5 h7 l-3.5 4z" fill="#1f1f1f"/></svg><svg style="position:absolute;left:1460px;top:93px" width="32" height="32" viewBox="0 0 16 16" preserveAspectRatio="none"><g transform="translate(16,0) scale(-1,1)"><path d="M0.8 8 L6.5 2.5 V5.6 H15 V10.4 H6.5 V13.5z" fill="#f2f2f2" stroke="#b0b0b0" stroke-width="0.7" stroke-linejoin="round"/></g></svg><svg style="position:absolute;left:1494px;top:92px" width="32" height="32" viewBox="0 0 16 16" preserveAspectRatio="none"><path d="M4.5 6.5 h7 l-3.5 4z" fill="#7d8185"/></svg><div style="position:absolute;left:1528px;top:90px;width:2px;height:37px;background:#2d2f31;"></div><svg style="position:absolute;left:1536px;top:93px" width="32" height="32" viewBox="0 0 16 16" preserveAspectRatio="none"><rect x="1" y="4.5" width="13" height="10.5" fill="#eef6ff" stroke="#a98f4e" stroke-width="0.6"/><rect x="1.2" y="4.6" width="12.6" height="2" fill="#46a9e6"/><path d="M9 7.5 L11.5 10 M6 12.5 L9.5 9" stroke="#3a3a3a" stroke-width="0.8"/><path d="M9 5 L13 1 L15.5 3.5 L11.5 7.5z" fill="#3cb043" stroke="#1e7a28" stroke-width="0.5"/></svg><svg style="position:absolute;left:3038px;top:94px" width="32" height="32" viewBox="0 0 16 16" preserveAspectRatio="none"><circle cx="6.5" cy="6.5" r="4.8" fill="none" stroke="#8a8e92" stroke-width="1.8"/><path d="M10 10 L15 15" stroke="#8a8e92" stroke-width="2.2" stroke-linecap="round"/></svg><svg style="position:absolute;left:3110px;top:93px" width="32" height="32" viewBox="0 0 16 16" preserveAspectRatio="none"><rect x="1" y="3.5" width="12.5" height="12" fill="#f4f4f4" stroke="#a98f4e" stroke-width="0.6"/><rect x="1.2" y="3.6" width="12" height="2" fill="#46a9e6"/><path d="M1 9.5 h12.5 M6.5 5.5 v10" stroke="#b0a070" stroke-width="0.5"/><path d="M12.5 0.5 l3.3 3.3 l-3.3 3.3 l-3.3 -3.3z" fill="#caa43a" stroke="#9c7a20" stroke-width="0.4"/><path d="M12.5 1.9 v3.8 M10.6 3.8 h3.8" stroke="#fff6d8" stroke-width="0.9"/></svg><div style="position:absolute;left:3147px;top:90px;width:2px;height:37px;background:#2d2f31;"></div><div style="position:absolute;left:3153px;top:90px;width:39px;height:37px;background:#cfe7fc;box-sizing:border-box;border:1px solid #98c6ee;border-radius:3px;"></div><svg style="position:absolute;left:3156px;top:93px" width="32" height="32" viewBox="0 0 16 16" preserveAspectRatio="none"><rect x="2" y="1" width="6.5" height="6.5" fill="#c99a6b" stroke="#7a4a2a" stroke-width="0.5"/><path d="M5.25 0.5 v7.5 M1.5 4.25 h7.5" stroke="#7a4a2a" stroke-width="0.6"/><path d="M13 1 v5.5 a2.5 2.5 0 0 1 -4.5 1.5" fill="none" stroke="#3a6fb5" stroke-width="1.5"/><circle cx="9.5" cy="12" r="3.2" fill="#5a4aa8" stroke="#3a2a80" stroke-width="0.4"/><circle cx="4.8" cy="9.8" r="3.3" fill="#2e9a3c" stroke="#1a6a28" stroke-width="0.4"/></svg><div style="position:absolute;left:546px;top:138px;width:78px;height:38px;background:#4b4f53;"></div><div style="position:absolute;left:626.5px;top:140px;width:2px;height:33px;background:#262829;"></div><div style="position:absolute;left:632px;top:138px;width:39px;height:38px;background:#4b4f53;"></div><div style="position:absolute;left:672px;top:138px;width:39px;height:38px;background:#4b4f53;"></div><svg style="position:absolute;left:551px;top:143px" width="32" height="32" viewBox="0 0 16 16" preserveAspectRatio="none"><rect x="1" y="1" width="10.5" height="10.5" fill="#d8eef0" stroke="#9aa4b8" stroke-width="0.7"/><rect x="4" y="4" width="10.5" height="10.5" fill="#e8f4f6" stroke="#9aa4b8" stroke-width="0.7"/><path d="M5.8 9.5 h7" stroke="#1a3d7a" stroke-width="1.2"/></svg><svg style="position:absolute;left:588px;top:142px" width="32" height="32" viewBox="0 0 16 16" preserveAspectRatio="none"><path d="M0.8 4.5 L5 1 V3 H10.5 V6 H5 V8z" fill="#fff3c8" stroke="#c08a20" stroke-width="0.8" stroke-linejoin="round"/><path d="M15.2 11.5 L11 8 V10 H5.5 V13 H11 V15z" fill="#fff3c8" stroke="#c08a20" stroke-width="0.8" stroke-linejoin="round"/></svg><svg style="position:absolute;left:636px;top:142px" width="32" height="32" viewBox="0 0 16 16" preserveAspectRatio="none"><circle cx="5" cy="5" r="4" fill="#d6d6d6" stroke="#b0b0b0" stroke-width="0.5"/><circle cx="11.2" cy="7.8" r="3.6" fill="#cfcfcf" stroke="#a8a8a8" stroke-width="0.5"/><circle cx="6" cy="11.5" r="3.8" fill="#c4c4c4" stroke="#a0a0a0" stroke-width="0.5"/></svg><svg style="position:absolute;left:675px;top:141.6px" width="32" height="32" viewBox="0 0 16 16" preserveAspectRatio="none"><circle cx="8" cy="3" r="1.8" fill="#fff" stroke="#111" stroke-width="0.6"/><circle cx="8" cy="8" r="1.8" fill="#fff" stroke="#111" stroke-width="0.6"/><circle cx="8" cy="13" r="1.8" fill="#fff" stroke="#111" stroke-width="0.6"/></svg><div style="position:absolute;left:721px;top:147px;width:19px;height:7px;background:transparent;box-sizing:border-box;border:1.5px solid #d4d4d4;"></div><div style="position:absolute;left:760px;top:147px;width:19px;height:19px;background:transparent;box-sizing:border-box;border:1.5px solid #d4d4d4;"></div><div style="position:absolute;left:760px;top:151.5px;width:19px;height:1.5px;background:#d4d4d4;"></div><div style="position:absolute;left:2519px;top:147px;width:19px;height:7px;background:transparent;box-sizing:border-box;border:1.5px solid #d4d4d4;"></div><div style="position:absolute;left:2558px;top:147px;width:19px;height:19px;background:transparent;box-sizing:border-box;border:1.5px solid #d4d4d4;"></div><div style="position:absolute;left:2558px;top:151.5px;width:19px;height:1.5px;background:#d4d4d4;"></div><div style="position:absolute;left:3123px;top:147px;width:19px;height:7px;background:transparent;box-sizing:border-box;border:1.5px solid #d4d4d4;"></div><div style="position:absolute;left:3162px;top:147px;width:19px;height:19px;background:transparent;box-sizing:border-box;border:1.5px solid #d4d4d4;"></div><div style="position:absolute;left:3162px;top:151.5px;width:19px;height:1.5px;background:#d4d4d4;"></div><svg style="position:absolute;left:2790px;top:187px" width="32" height="32" viewBox="0 0 16 16" preserveAspectRatio="none"><path d="M2 4 h7 l2.5 2.5 v9 h-9.5z" fill="#f2f2f2" stroke="#a8a8a8" stroke-width="0.6"/><path d="M12.5 0.5 l3.3 3.3 l-3.3 3.3 l-3.3 -3.3z" fill="#caa43a" stroke="#9c7a20" stroke-width="0.4"/><path d="M12.5 1.9 v3.8 M10.6 3.8 h3.8" stroke="#fff6d8" stroke-width="0.9"/></svg><svg style="position:absolute;left:2821px;top:187.5px" width="32" height="32" viewBox="0 0 16 16" preserveAspectRatio="none"><path d="M4.5 6.5 h7 l-3.5 4z" fill="#1f1f1f"/></svg><div style="position:absolute;left:2854px;top:188px;width:2px;height:33px;background:#2d2f31;"></div><div style="position:absolute;left:2860px;top:186px;width:39px;height:37px;background:#cfe7fc;box-sizing:border-box;border:1px solid #98c6ee;border-radius:3px;"></div><svg style="position:absolute;left:2863px;top:188px" width="32" height="32" viewBox="0 0 16 16" preserveAspectRatio="none"><rect x="1" y="1.5" width="6" height="3.5" fill="#d0d8e8" stroke="#8090b0" stroke-width="0.5"/><path d="M3 5 v8 h3 M3 8.5 h3 M9 4.5 h6 M9 8.5 h6 M9 12.5 h6" stroke="#6080b8" stroke-width="0.8" fill="none"/><rect x="6.5" y="7.3" width="2.2" height="2.2" fill="none" stroke="#6080b8" stroke-width="0.6"/><rect x="6.5" y="11.3" width="2.2" height="2.2" fill="none" stroke="#6080b8" stroke-width="0.6"/></svg><svg style="position:absolute;left:2902px;top:188px" width="32" height="32" viewBox="0 0 16 16" preserveAspectRatio="none"><circle cx="4" cy="4" r="3.3" fill="#fff" stroke="#2a4a80" stroke-width="0.8"/><path d="M4 2 v2 h1.5" stroke="#2a4a80" stroke-width="0.6" fill="none"/><path d="M4 8 v5 h3 M4 10 h3 M9 5 h6 M9 9 h6 M9 13 h6" stroke="#6080b8" stroke-width="0.8" fill="none"/><rect x="6.5" y="8" width="2.2" height="2.2" fill="none" stroke="#6080b8" stroke-width="0.6"/><rect x="6.5" y="12" width="2.2" height="2.2" fill="none" stroke="#6080b8" stroke-width="0.6"/></svg><div style="position:absolute;left:2940.5px;top:188px;width:2px;height:33px;background:#2d2f31;"></div><svg style="position:absolute;left:2950px;top:188px" width="32" height="32" viewBox="0 0 16 16" preserveAspectRatio="none"><circle cx="5" cy="5" r="3.6" fill="#c8c8c8" stroke="#a0a0a0" stroke-width="0.5"/><circle cx="11" cy="7" r="3.4" fill="#c0c0c0" stroke="#a0a0a0" stroke-width="0.5"/><circle cx="6.5" cy="11.5" r="3.6" fill="#8a7ac0" stroke="#5a4a90" stroke-width="0.5"/></svg><div style="position:absolute;left:2987px;top:188px;width:2px;height:33px;background:#2d2f31;"></div><svg style="position:absolute;left:2996px;top:188px" width="32" height="32" viewBox="0 0 16 16" preserveAspectRatio="none"><path d="M3 9 l2.5 2.5 l5 -6" stroke="#8a90a8" stroke-width="1.2" fill="none"/><path d="M1 1 L15 15" stroke="#1a2a8a" stroke-width="1.2"/></svg><svg style="position:absolute;left:3034px;top:188px" width="32" height="32" viewBox="0 0 16 16" preserveAspectRatio="none"><circle cx="4" cy="2.5" r="1.6" fill="#e8b030"/><path d="M2.5 4.5 h3 v6 h-0.8 v4.5 h-1.4 v-4.5 h-0.8z" fill="#d49a20" stroke="#9a6a10" stroke-width="0.4"/><circle cx="11" cy="2.5" r="1.6" fill="#c8c8c8"/><path d="M9.5 4.5 h3 v6 h-0.8 v4.5 h-1.4 v-4.5 h-0.8z" fill="#c0c0c0"/><path d="M7 1 L14.5 9" stroke="#1a2a8a" stroke-width="1.1"/></svg><svg style="position:absolute;left:3075px;top:187px" width="32" height="32" viewBox="0 0 16 16" preserveAspectRatio="none"><rect x="1" y="1" width="10.5" height="10.5" fill="#d8eef0" stroke="#9aa4b8" stroke-width="0.7"/><rect x="4" y="4" width="10.5" height="10.5" fill="#e8f4f6" stroke="#9aa4b8" stroke-width="0.7"/><path d="M5.8 9.5 h7" stroke="#1a3d7a" stroke-width="1.2"/></svg><div style="position:absolute;left:3112.5px;top:188px;width:2px;height:33px;background:#2d2f31;"></div><svg style="position:absolute;left:3120px;top:187px" width="32" height="32" viewBox="0 0 16 16" preserveAspectRatio="none"><ellipse cx="11" cy="3" rx="3.5" ry="1.5" fill="#cfe0f4" stroke="#6a8ab8" stroke-width="0.5"/><path d="M7.5 3 v10 a3.5 1.5 0 0 0 7 0 v-10" fill="#b8cfec" stroke="#6a8ab8" stroke-width="0.5"/><path d="M1 7 q1 -5 6 -4 l-1 -2 l3.5 3 l-3.5 2.5 l0.8 -2 q-3.5 -0.5 -4.8 2.5z" fill="#f2b92a" stroke="#b47a10" stroke-width="0.4"/><path d="M9 10 q-1 5 -6 4 l1 2 l-3.5 -3 l3.5 -2.5 l-0.8 2 q3.5 0.5 4.8 -2.5z" fill="#f2b92a" stroke="#b47a10" stroke-width="0.4"/></svg><svg style="position:absolute;left:3161px;top:191px" width="32" height="32" viewBox="0 0 16 16" preserveAspectRatio="none"><circle cx="8" cy="3" r="1.8" fill="#fff" stroke="#111" stroke-width="0.6"/><circle cx="8" cy="8" r="1.8" fill="#fff" stroke="#111" stroke-width="0.6"/><circle cx="8" cy="13" r="1.8" fill="#fff" stroke="#111" stroke-width="0.6"/></svg><svg style="position:absolute;left:3164px;top:238px" width="30" height="30" viewBox="0 0 16 16" preserveAspectRatio="none"><circle cx="8" cy="8" r="7" fill="#f8fbff" stroke="#c8d8ec" stroke-width="1"/><circle cx="8" cy="8" r="6" fill="#fff" stroke="#2a5aa0" stroke-width="0.6" stroke-dasharray="1 0.6"/><text x="8" y="12.2" text-anchor="middle" font-family="Liberation Sans" font-weight="bold" font-size="10" fill="#1a4a90">?</text></svg><svg style="position:absolute;left:2850px;top:245px;" width="14" height="17" viewBox="0 0 14 17"><path d="M2 1 L12 8.5 L2 16 L5 8.5z" fill="#8a8a8a"/></svg><svg style="position:absolute;left:2933px;top:245px;" width="14" height="17" viewBox="0 0 14 17"><path d="M2 1 L12 8.5 L2 16 L5 8.5z" fill="#8a8a8a"/></svg><div style="position:absolute;left:2800px;top:784px;width:273px;height:38px;background:#4b4f53;"></div><div style="position:absolute;left:3074px;top:784px;width:39px;height:38px;background:#4b4f53;"></div><svg style="position:absolute;left:2803px;top:788px" width="32" height="32" viewBox="0 0 16 16" preserveAspectRatio="none"><circle cx="5" cy="5" r="4" fill="#d6d6d6" stroke="#b0b0b0" stroke-width="0.5"/><circle cx="11.2" cy="7.8" r="3.6" fill="#cfcfcf" stroke="#a8a8a8" stroke-width="0.5"/><circle cx="6" cy="11.5" r="3.8" fill="#c4c4c4" stroke="#a0a0a0" stroke-width="0.5"/></svg><svg style="position:absolute;left:2844px;top:788px" width="32" height="32" viewBox="0 0 16 16" preserveAspectRatio="none"><rect x="1" y="1" width="10.5" height="10.5" fill="#d8eef0" stroke="#9aa4b8" stroke-width="0.7"/><rect x="4" y="4" width="10.5" height="10.5" fill="#e8f4f6" stroke="#9aa4b8" stroke-width="0.7"/><path d="M5.8 9.5 h7" stroke="#1a3d7a" stroke-width="1.2"/></svg><svg style="position:absolute;left:2880px;top:788px" width="32" height="32" viewBox="0 0 16 16" preserveAspectRatio="none"><path d="M2.5 1 v12" stroke="#3a7ac0" stroke-width="0.8"/><path d="M0.8 11 l1.7 3.5 l1.7 -3.5z" fill="#3a7ac0"/><text x="5" y="7" font-family="Liberation Sans" font-weight="bold" font-size="8" fill="#2a9a8a">a</text><text x="8" y="15" font-family="Liberation Sans" font-weight="bold" font-size="8" fill="#a040a8">z</text></svg><svg style="position:absolute;left:2919px;top:788px" width="32" height="32" viewBox="0 0 16 16" preserveAspectRatio="none"><circle cx="8.5" cy="8.5" r="5.5" fill="#4aa8e8" stroke="#2a78c0" stroke-width="0.6"/><path d="M7 6 h4 M7 6 v6 M7 8.5 h3" stroke="#fff" stroke-width="1.2"/><path d="M1.5 1 L15 14.5" stroke="#1a2a8a" stroke-width="1.2"/></svg><svg style="position:absolute;left:2960px;top:788px" width="32" height="32" viewBox="0 0 16 16" preserveAspectRatio="none"><circle cx="6.5" cy="10" r="3" fill="#c0c0c0" stroke="#909090" stroke-width="0.5"/><text x="10" y="6" font-family="Liberation Sans" font-weight="bold" font-size="7" fill="#2a6ab8">S</text><path d="M1 6 L11 15" stroke="#1a2a8a" stroke-width="1.1"/></svg><svg style="position:absolute;left:2998px;top:787px" width="32" height="32" viewBox="0 0 16 16" preserveAspectRatio="none"><circle cx="8" cy="8" r="3.4" fill="#3cb043" stroke="#1e7a28" stroke-width="0.5"/><circle cx="8" cy="7" r="1.6" fill="#8ad88a"/></svg><svg style="position:absolute;left:3038px;top:788px" width="32" height="32" viewBox="0 0 16 16" preserveAspectRatio="none"><circle cx="6.5" cy="10" r="3" fill="#c0c0c0" stroke="#909090" stroke-width="0.5"/><text x="10" y="6" font-family="Liberation Sans" font-weight="bold" font-size="7" fill="#2a6ab8">L</text><path d="M1 6 L11 15" stroke="#1a2a8a" stroke-width="1.1"/></svg><svg style="position:absolute;left:3077.5px;top:789px" width="32" height="32" viewBox="0 0 16 16" preserveAspectRatio="none"><circle cx="8" cy="3" r="1.8" fill="#fff" stroke="#111" stroke-width="0.6"/><circle cx="8" cy="8" r="1.8" fill="#fff" stroke="#111" stroke-width="0.6"/><circle cx="8" cy="13" r="1.8" fill="#fff" stroke="#111" stroke-width="0.6"/></svg><div style="position:absolute;left:3123px;top:793px;width:19px;height:7px;background:transparent;box-sizing:border-box;border:1.5px solid #d4d4d4;"></div><div style="position:absolute;left:3162px;top:793px;width:19px;height:19px;background:transparent;box-sizing:border-box;border:1.5px solid #d4d4d4;"></div><div style="position:absolute;left:3162px;top:797.5px;width:19px;height:1.5px;background:#d4d4d4;"></div><div style="position:absolute;left:2606px;top:1428px;width:117px;height:38px;background:#4b4f53;"></div><div style="position:absolute;left:2725px;top:1430px;width:2px;height:34px;background:#262829;"></div><div style="position:absolute;left:2730px;top:1428px;width:196px;height:38px;background:#4b4f53;"></div><div style="position:absolute;left:2928.5px;top:1430px;width:2px;height:34px;background:#262829;"></div><div style="position:absolute;left:2934px;top:1428px;width:179px;height:38px;background:#4b4f53;"></div><svg style="position:absolute;left:2612px;top:1432px" width="32" height="32" viewBox="0 0 16 16" preserveAspectRatio="none"><rect x="2.5" y="3" width="11" height="11" rx="1.5" fill="#cfcfcf" stroke="#9a9a9a" stroke-width="1"/><rect x="4" y="4.5" width="8" height="8" fill="#bdbdbd"/></svg><svg style="position:absolute;left:2650px;top:1432px" width="32" height="32" viewBox="0 0 16 16" preserveAspectRatio="none"><path d="M3 3 L13 13 M13 3 L3 13" stroke="#9c9c9c" stroke-width="2.6" stroke-linecap="round"/></svg><svg style="position:absolute;left:2688px;top:1431px" width="32" height="32" viewBox="0 0 16 16" preserveAspectRatio="none"><path d="M1.5 1.5 L9 9 M9 1.5 L1.5 9" stroke="#e0e0e0" stroke-width="1.8" stroke-linecap="round"/><path d="M6 6 L14.5 14.5 M14.5 6 L6 14.5" stroke="#9c9c9c" stroke-width="2.2" stroke-linecap="round"/></svg><svg style="position:absolute;left:2735px;top:1430px" width="32" height="32" viewBox="0 0 16 16" preserveAspectRatio="none"><path d="M1 0.8 h8 l3 3 v10.5 h-11z" fill="#f2f2f2" stroke="#b7a36a" stroke-width="0.6"/><path d="M2.5 4 h6 M2.5 6 h7 M2.5 8 h5 M2.5 10 h6" stroke="#6b85c4" stroke-width="0.7"/><circle cx="12" cy="12" r="3.3" fill="#2a2a2a"/><path d="M10.3 10.3 l3.4 3.4 M13.7 10.3 l-3.4 3.4" stroke="#dcdcdc" stroke-width="0.9"/></svg><svg style="position:absolute;left:2774px;top:1431px" width="32" height="32" viewBox="0 0 16 16" preserveAspectRatio="none"><rect x="5" y="0.8" width="10" height="14.5" fill="#e8f0fa" stroke="#b7a36a" stroke-width="0.6"/><rect x="12" y="2" width="2.2" height="12" fill="#8ea8cc"/><rect x="12.2" y="3" width="1.8" height="2" fill="#fff"/><rect x="12.2" y="11" width="1.8" height="2" fill="#fff"/><path d="M2.5 10 v-2 a2.5 2.5 0 0 1 5 0 v2" fill="none" stroke="#b07a10" stroke-width="1.2"/><rect x="1.2" y="9.6" width="7.6" height="6" rx="0.6" fill="#f0b82a" stroke="#a06a08" stroke-width="0.5"/><rect x="4.6" y="11.5" width="0.8" height="2.3" fill="#5a3a00"/></svg><svg style="position:absolute;left:2813px;top:1430px" width="32" height="32" viewBox="0 0 16 16" preserveAspectRatio="none"><path d="M1.5 0.8 h8 l3 3 v11 h-11z" fill="#f0ead6" stroke="#b7a36a" stroke-width="0.6"/><path d="M3.5 4 h5 M3.5 6 h6 M3.5 8 h4 M3.5 10 h5 M3.5 12 h3" stroke="#6b85c4" stroke-width="0.7"/><path d="M13.5 6.5 v5 h-5" fill="none" stroke="#d79a1a" stroke-width="1.8"/><path d="M6.3 11.5 l3 -2.5 v5z" fill="#d79a1a"/></svg><div style="position:absolute;left:2848px;top:1428px;width:39px;height:37px;background:#cfe7fc;box-sizing:border-box;border:1px solid #98c6ee;border-radius:3px;"></div><svg style="position:absolute;left:2852px;top:1432px" width="32" height="32" viewBox="0 0 16 16" preserveAspectRatio="none"><rect x="5" y="1" width="10.5" height="7.5" rx="0.5" fill="#eef3fb" stroke="#3a70c4" stroke-width="0.9"/><path d="M7 3.5 h5 M7 5.8 h7" stroke="#3a5a9a" stroke-width="0.8"/><path d="M1.5 8 v4.5 h7.5 v-4" fill="#eef3fb" stroke="#3a70c4" stroke-width="0.8"/><path d="M4 14.5 h4 M6 12.5 v2" stroke="#3a70c4" stroke-width="1"/></svg><div style="position:absolute;left:2888px;top:1428px;width:38px;height:37px;background:#cfe7fc;box-sizing:border-box;border:1px solid #98c6ee;border-radius:3px;"></div><svg style="position:absolute;left:2891px;top:1432px" width="32" height="32" viewBox="0 0 16 16" preserveAspectRatio="none"><rect x="5" y="1" width="10.5" height="7.5" rx="0.5" fill="#eef3fb" stroke="#3a70c4" stroke-width="0.9"/><path d="M6.5 2.5 l3.5 3.5 M10 2.5 l-3.5 3.5" stroke="#e02020" stroke-width="1.3"/><path d="M11.5 3.5 h2.5 M11.5 5.8 h2.5" stroke="#3a5a9a" stroke-width="0.8"/><path d="M1.5 8 v4.5 h7.5 v-4" fill="#eef3fb" stroke="#3a70c4" stroke-width="0.8"/><path d="M4 14.5 h4 M6 12.5 v2" stroke="#3a70c4" stroke-width="1"/></svg><svg style="position:absolute;left:2939px;top:1431px" width="32" height="32" viewBox="0 0 16 16" preserveAspectRatio="none"><rect x="1" y="4.5" width="13" height="10.5" fill="#eef6ff" stroke="#a98f4e" stroke-width="0.6"/><rect x="1.2" y="4.6" width="12.6" height="2" fill="#46a9e6"/><path d="M9 7.5 L11.5 10 M6 12.5 L9.5 9" stroke="#3a3a3a" stroke-width="0.8"/><path d="M9 5 L13 1 L15.5 3.5 L11.5 7.5z" fill="#3cb043" stroke="#1e7a28" stroke-width="0.5"/></svg><svg style="position:absolute;left:2978px;top:1430px" width="32" height="32" viewBox="0 0 16 16" preserveAspectRatio="none"><rect x="1" y="1.5" width="14" height="10.5" rx="1" fill="#3a70c4"/><rect x="2.3" y="2.8" width="11.4" height="7.9" fill="#eef3fb"/><path d="M3.8 5 h5 M3.8 7.3 h8" stroke="#3a5a9a" stroke-width="0.9"/><rect x="6.5" y="12" width="3" height="1.6" fill="#3a70c4"/><rect x="3.5" y="13.4" width="9" height="1.1" fill="#3a70c4"/></svg><svg style="position:absolute;left:3019px;top:1430px" width="32" height="32" viewBox="0 0 16 16" preserveAspectRatio="none"><path d="M4.5 6.5 h7 l-3.5 4z" fill="#1f1f1f"/></svg><svg style="position:absolute;left:3047px;top:1430px" width="32" height="32" viewBox="0 0 16 16" preserveAspectRatio="none"><rect x="1" y="3.3" width="13.5" height="11.6" fill="#eef7ff" stroke="#a98f4e" stroke-width="0.6"/><rect x="1.2" y="3.4" width="9" height="2.6" fill="#46a9e6"/><path d="M3 14.5 q6 0 8 -6" stroke="#f1d47a" stroke-width="0.9" fill="none"/><path d="M12.5 0.5 l3.3 3.3 l-3.3 3.3 l-3.3 -3.3z" fill="#caa43a" stroke="#9c7a20" stroke-width="0.4"/><path d="M12.5 1.9 v3.8 M10.6 3.8 h3.8" stroke="#fff6d8" stroke-width="0.9"/></svg><svg style="position:absolute;left:3089px;top:1430px" width="32" height="32" viewBox="0 0 16 16" preserveAspectRatio="none"><path d="M4.5 6.5 h7 l-3.5 4z" fill="#1f1f1f"/></svg><div style="position:absolute;left:3123px;top:1437px;width:19px;height:7px;background:transparent;box-sizing:border-box;border:1.5px solid #d4d4d4;"></div><div style="position:absolute;left:3162px;top:1437px;width:19px;height:19px;background:transparent;box-sizing:border-box;border:1.5px solid #d4d4d4;"></div><div style="position:absolute;left:3162px;top:1441.5px;width:19px;height:1.5px;background:#d4d4d4;"></div><svg style="position:absolute;left:16px;top:146px" width="32" height="32" viewBox="0 0 16 16" preserveAspectRatio="none"><path d="M1.45 1 v13 M1.45 4.3 h3.6 M1.45 10.35 h3.6" stroke="#7a8494" stroke-width="0.9"/><rect x="5" y="2" width="5" height="5" fill="#c8742c"/><rect x="5" y="8" width="5" height="5" fill="#c8742c"/><rect x="5.9" y="2.9" width="1.2" height="1.2" fill="#f8e8c0"/><rect x="5.9" y="4.9" width="1.2" height="1.2" fill="#f8e8c0"/><rect x="5.9" y="8.9" width="1.2" height="1.2" fill="#f8e8c0"/><rect x="5.9" y="10.9" width="1.2" height="1.2" fill="#f8e8c0"/><rect x="7.9" y="2.9" width="1.2" height="1.2" fill="#f8e8c0"/><rect x="7.9" y="4.9" width="1.2" height="1.2" fill="#f8e8c0"/><rect x="7.9" y="8.9" width="1.2" height="1.2" fill="#f8e8c0"/><rect x="7.9" y="10.9" width="1.2" height="1.2" fill="#f8e8c0"/></svg><svg style="position:absolute;left:821px;top:147px" width="26" height="30" viewBox="0 0 16 16" preserveAspectRatio="none"><path d="M1.2 0.8 h9.5 l3.5 3.5 v11 h-13z" fill="#edf3fb" stroke="#b59a4a" stroke-width="0.9"/><path d="M10.7 0.8 v3.5 h3.5" fill="#e8cf8a" stroke="none"/><path d="M9 4 v6.5 q0 2.8 -2.8 2.8 q-2 0 -2.6 -1.6" fill="none" stroke="#2c6aa8" stroke-width="1.7"/></svg><svg style="position:absolute;left:2618px;top:147px" width="30" height="30" viewBox="0 0 16 16" preserveAspectRatio="none"><path d="M2 1 h11 v12.5 q-3 -1.5 -5.5 1 q-3 -1.5 -5.5 1z" fill="#eeeef6" stroke="#7a7aa0" stroke-width="0.7"/><path d="M4 3.5 h7 M4 5.5 h7 M4 7.5 h7 M4 9.5 h7" stroke="#4a4a60" stroke-width="0.7"/><path d="M1.5 13 q3 -1 6 1 q3 -1.5 6 -0.5 v2 h-12z" fill="#b8b0e0"/></svg><svg style="position:absolute;left:2614px;top:793px" width="30" height="30" viewBox="0 0 16 16" preserveAspectRatio="none"><rect x="1" y="1" width="5" height="5" fill="#fff" stroke="#2a7ac8" stroke-width="1"/><rect x="1" y="10" width="5" height="5" fill="#fff" stroke="#2a7ac8" stroke-width="1"/><path d="M8 3 h7 M10 8 h5 M8 13 h7" stroke="#2a7ac8" stroke-width="1.2"/><rect x="7" y="7" width="2" height="2" fill="#2a7ac8"/></svg><svg style="position:absolute;left:815px;top:1435px" width="33" height="33" viewBox="0 0 16 16" preserveAspectRatio="none"><path d="M1 1 h9.5 q2.5 0 2.5 2.5 v11.5 h-12z" fill="#dfe8f4" stroke="#9ab0c8" stroke-width="0.6"/><path d="M7 1 v14 M1 8 h12" stroke="#a8bcd8" stroke-width="0.6"/><circle cx="4.5" cy="4.5" r="2.5" fill="#e01818"/><path d="M3.5 8 L7 15 H0z" fill="#f0c040" stroke="#c08010" stroke-width="0.5"/><rect x="3.2" y="10" width="0.8" height="2.5" fill="#222"/><rect x="3.2" y="13" width="0.8" height="0.8" fill="#222"/></svg><svg style="position:absolute;left:986px;top:1440px" width="24" height="24" viewBox="0 0 16 16" preserveAspectRatio="none"><circle cx="8" cy="8" r="6.5" fill="#1a5aa0"/><text x="8" y="12" text-anchor="middle" font-family="Liberation Serif" font-style="italic" font-weight="bold" font-size="11" fill="#fff">@</text></svg><svg style="position:absolute;left:1132px;top:1436px" width="32" height="32" viewBox="0 0 16 16" preserveAspectRatio="none"><path d="M1 0.8 h8 l3 3 v11 h-11z" fill="#f2f2f2" stroke="#b7a36a" stroke-width="0.6"/><text x="2" y="10" font-family="Liberation Mono" font-size="9" fill="#5a7ac0">{</text><path d="M6 6 h4 M6 8 h4 M6 10 h4" stroke="#6b85c4" stroke-width="0.7"/><path d="M7 13 h5 v-2 l3.5 2.8 l-3.5 2.8 v-2 h-5z" fill="#f2b92a" stroke="#b47a10" stroke-width="0.4"/></svg><svg style="position:absolute;left:1321px;top:1436px" width="30" height="30" viewBox="0 0 16 16" preserveAspectRatio="none"><rect x="1" y="1.5" width="14" height="10.5" rx="1" fill="#3a70c4"/><rect x="2.3" y="2.8" width="11.4" height="7.9" fill="#eef3fb"/><path d="M3.8 5 h5 M3.8 7.3 h8" stroke="#3a5a9a" stroke-width="0.9"/><rect x="6.5" y="12" width="3" height="1.6" fill="#3a70c4"/><rect x="3.5" y="13.4" width="9" height="1.1" fill="#3a70c4"/></svg><svg style="position:absolute;left:38px;top:186px" width="32" height="32" viewBox="0 0 16 16" preserveAspectRatio="none"><path d="M2 6 h11 l-2 8 h-9z" fill="#f4e4b0" stroke="#b9822e" stroke-width="0.5"/><path d="M3 14 l2.5 -5 h10 l-2.5 5z" fill="#9ccff4" stroke="#3a6ab8" stroke-width="0.6"/><rect x="0" y="0" width="7" height="5.5" fill="#fff"/><text x="0.5" y="5" font-family="Liberation Sans" font-weight="bold" font-size="6" fill="#1a4a90">M</text><rect x="9" y="0" width="6" height="7.5" fill="#fff"/><path d="M13 0.5 v4 q0 2 -2 2 q-1.3 0 -1.7 -1" fill="none" stroke="#1a4a90" stroke-width="1.3"/><path d="M3.5 8.5 L7 15.5 H0z" fill="#f0c040" stroke="#c08010" stroke-width="0.5"/><rect x="3.1" y="10.5" width="0.9" height="2.6" fill="#222"/><rect x="3.1" y="13.8" width="0.9" height="0.9" fill="#222"/></svg><svg style="position:absolute;left:71px;top:222px" width="31" height="30" viewBox="0 0 16 16" preserveAspectRatio="none"><path d="M0.7 2.2 h5 l1.2 1.3 h6.3 v9.8 h-12.5z" fill="#e9c06a" stroke="#b9822e" stroke-width="0.7"/><rect x="2" y="3.2" width="3.2" height="1" fill="#fff" opacity="0.8"/><path d="M0.7 13.3 l3 -7 h11.8 l-3 7z" fill="#f3d58a" stroke="#b9822e" stroke-width="0.7"/><rect x="6.5" y="0.5" width="6.5" height="6.5" fill="#d8b88a" stroke="#6a3a1a" stroke-width="0.5"/><path d="M9.75 0 v7.5 M6 3.75 h7.5" stroke="#6a3a1a" stroke-width="0.7"/></svg><svg style="position:absolute;left:103px;top:255px" width="31" height="31" viewBox="0 0 16 16" preserveAspectRatio="none"><rect x="1.5" y="1.5" width="13" height="13" fill="#b8774a"/><rect x="2.5" y="2.5" width="5" height="5" fill="#f4dcb4"/><rect x="8.5" y="2.5" width="5" height="5" fill="#f4dcb4"/><rect x="2.5" y="8.5" width="5" height="5" fill="#f4dcb4"/><rect x="8.5" y="8.5" width="5" height="5" fill="#f4dcb4"/><path d="M8 0 v16 M0 8 h16" stroke="#7a3a20" stroke-width="0.6"/></svg><svg style="position:absolute;left:138px;top:288.5px" width="27" height="30.4" viewBox="0 0 16 16" preserveAspectRatio="none"><path d="M1.2 0.8 h9.5 l3.5 3.5 v11 h-13z" fill="#edf3fb" stroke="#b59a4a" stroke-width="0.9"/><path d="M10.7 0.8 v3.5 h3.5" fill="#e8cf8a" stroke="none"/><path d="M9 4 v6.5 q0 2.8 -2.8 2.8 q-2 0 -2.6 -1.6" fill="none" stroke="#2c6aa8" stroke-width="1.7"/></svg><svg style="position:absolute;left:71px;top:324px" width="31" height="30" viewBox="0 0 16 16" preserveAspectRatio="none"><path d="M0.7 2.2 h5 l1.2 1.3 h6.3 v9.8 h-12.5z" fill="#c8b478" stroke="#9a7a3a" stroke-width="0.7"/><rect x="2" y="3.2" width="3.2" height="1" fill="#fff" opacity="0.8"/><path d="M0.7 13.3 l3 -7 h11.8 l-3 7z" fill="#d8c896" stroke="#9a7a3a" stroke-width="0.7"/><rect x="6.5" y="0.5" width="6.5" height="6.5" fill="#6ac85a" stroke="#2a4a1a" stroke-width="0.5"/><path d="M9.75 0 v7.5 M6 3.75 h7.5" stroke="#2a4a1a" stroke-width="0.7"/></svg><svg style="position:absolute;left:71px;top:359.7px" width="31" height="26" viewBox="0 0 16 16" preserveAspectRatio="none"><rect x="0.5" y="10" width="10" height="5" fill="#d8824a" stroke="#a05020" stroke-width="0.4"/><rect x="1" y="5.5" width="9" height="4.5" fill="#3aa86a" stroke="#1a6a3a" stroke-width="0.4"/><rect x="2" y="6.8" width="7" height="1.2" fill="#9ad8aa"/><rect x="0.5" y="2.5" width="8" height="3" fill="#3a8ad8" stroke="#1a5aa0" stroke-width="0.4"/><path d="M10 1.5 L11.8 0.8 L15.5 14.5 L13.7 15.2z" fill="#f2c02a" stroke="#c0700a" stroke-width="0.5"/></svg><svg style="position:absolute;left:71px;top:393.7px" width="31" height="26" viewBox="0 0 16 16" preserveAspectRatio="none"><rect x="0.5" y="10" width="10" height="5" fill="#d8824a" stroke="#a05020" stroke-width="0.4"/><rect x="1" y="5.5" width="9" height="4.5" fill="#3aa86a" stroke="#1a6a3a" stroke-width="0.4"/><rect x="2" y="6.8" width="7" height="1.2" fill="#9ad8aa"/><rect x="0.5" y="2.5" width="8" height="3" fill="#3a8ad8" stroke="#1a5aa0" stroke-width="0.4"/><path d="M10 1.5 L11.8 0.8 L15.5 14.5 L13.7 15.2z" fill="#f2c02a" stroke="#c0700a" stroke-width="0.5"/></svg><svg style="position:absolute;left:71px;top:426px" width="31" height="30" viewBox="0 0 16 16" preserveAspectRatio="none"><path d="M0.7 2.2 h5 l1.2 1.3 h6.3 v9.8 h-12.5z" fill="#e9c06a" stroke="#b9822e" stroke-width="0.7"/><rect x="2" y="3.2" width="3.2" height="1" fill="#fff" opacity="0.8"/><path d="M0.7 13.3 l3 -7 h11.8 l-3 7z" fill="#f3d58a" stroke="#b9822e" stroke-width="0.7"/></svg><svg style="position:absolute;left:71px;top:460px" width="31" height="30" viewBox="0 0 16 16" preserveAspectRatio="none"><path d="M0.7 2.2 h5 l1.2 1.3 h6.3 v9.8 h-12.5z" fill="#e9c06a" stroke="#b9822e" stroke-width="0.7"/><rect x="2" y="3.2" width="3.2" height="1" fill="#fff" opacity="0.8"/><path d="M0.7 13.3 l3 -7 h11.8 l-3 7z" fill="#f3d58a" stroke="#b9822e" stroke-width="0.7"/></svg><svg style="position:absolute;left:74.2px;top:493.2px" width="29.4" height="29.4" viewBox="0 0 16 16" preserveAspectRatio="none"><path d="M1.5 0.8 h8 l3 3 v11.5 h-11z" fill="#f4f8fe" stroke="#a89050" stroke-width="0.7"/><path d="M9.5 0.8 v3 h3" fill="#e8d8a0"/><text x="2.2" y="12.5" font-family="Liberation Sans" font-weight="bold" font-size="7.5" fill="#2a5aa0">M</text></svg><svg style="position:absolute;left:2657px;top:835px" width="28" height="28" viewBox="0 0 16 16" preserveAspectRatio="none"><rect x="1.5" y="1.5" width="13" height="13" fill="#8a8a60"/><rect x="2.5" y="2.5" width="5" height="5" fill="#e8e4c4"/><rect x="8.5" y="2.5" width="5" height="5" fill="#e8e4c4"/><rect x="2.5" y="8.5" width="5" height="5" fill="#e8e4c4"/><rect x="8.5" y="8.5" width="5" height="5" fill="#e8e4c4"/><path d="M8 0 v16 M0 8 h16" stroke="#6a6a40" stroke-width="0.6"/></svg><svg style="position:absolute;left:2654.6px;top:866px" width="36" height="36" viewBox="0 0 16 16" preserveAspectRatio="none"><circle cx="6" cy="6" r="5.6" fill="#2d9a3a" stroke="#1d6a28" stroke-width="0.6"/><path d="M8.4 4.2 A2.8 2.8 0 1 0 8.4 7.8" fill="none" stroke="#fff" stroke-width="1.8"/><path d="M12.8 9.6 L16 12.2 L12.8 14.6z" fill="#3aa860" stroke="#fff" stroke-width="0.6"/></svg><svg style="position:absolute;left:2692px;top:907px;" width="20" height="20" viewBox="0 0 20 20"><circle cx="10" cy="10.5" r="7.8" fill="#3cb043" stroke="#1e7a28" stroke-width="1"/><ellipse cx="10" cy="8" rx="4" ry="3" fill="#8ad88a" opacity="0.8"/></svg><svg style="position:absolute;left:2717px;top:899px;" width="14" height="16" viewBox="0 0 14 16"><rect x="0.5" y="0.5" width="13" height="15" fill="#fff"/><text x="7" y="14" text-anchor="middle" font-family="Liberation Sans" font-weight="bold" font-size="15" fill="#c01030">S</text></svg><svg style="position:absolute;left:2543px;top:198px;" width="16" height="10" viewBox="0 0 16 10"><path d="M1 9 L8 1.5 L15 9z" fill="#a3a3a3"/></svg><svg style="position:absolute;left:2543px;top:1358px;" width="16" height="10" viewBox="0 0 16 10"><path d="M1 1 L8 8.5 L15 1z" fill="#a3a3a3"/></svg><svg style="position:absolute;left:893px;top:1390px;" width="10" height="16" viewBox="0 0 10 16"><path d="M9 1 L1.5 8 L9 15z" fill="#a3a3a3"/></svg><svg style="position:absolute;left:2511px;top:1390px;" width="10" height="16" viewBox="0 0 10 16"><path d="M1 1 L8.5 8 L1 15z" fill="#a3a3a3"/></svg><svg style="position:absolute;left:2580px;top:1866px" width="32" height="32" viewBox="0 0 16 16" preserveAspectRatio="none"><rect x="0" y="0" width="2" height="2" fill="#cec5b5"/><rect x="0" y="4" width="2" height="2" fill="#cec5b5"/><rect x="0" y="8" width="2" height="2" fill="#cec5b5"/><rect x="0" y="12" width="2" height="2" fill="#cec5b5"/></svg><svg style="position:absolute;left:3152px;top:1866px" width="32" height="32" viewBox="0 0 16 16" preserveAspectRatio="none"><rect x="0" y="0" width="2" height="2" fill="#cec5b5"/><rect x="0" y="4" width="2" height="2" fill="#cec5b5"/><rect x="0" y="8" width="2" height="2" fill="#cec5b5"/><rect x="0" y="12" width="2" height="2" fill="#cec5b5"/></svg><svg style="position:absolute;left:3166px;top:1858px;" width="30" height="25" viewBox="0 0 30 25"><defs><radialGradient id="bg1" cx="0.5" cy="0.75" r="0.6"><stop offset="0" stop-color="#ffffff"/><stop offset="0.6" stop-color="#fde8a0"/><stop offset="1" stop-color="#f6d070"/></radialGradient></defs><path d="M7 26 L6.5 21 Q4.5 17 4.5 13.5 A9.5 9.5 0 0 1 23.5 13.5 Q23.5 17 21.5 21 L21 26z" fill="url(#bg1)" stroke="#eea318" stroke-width="2.2"/></svg></body></html>
